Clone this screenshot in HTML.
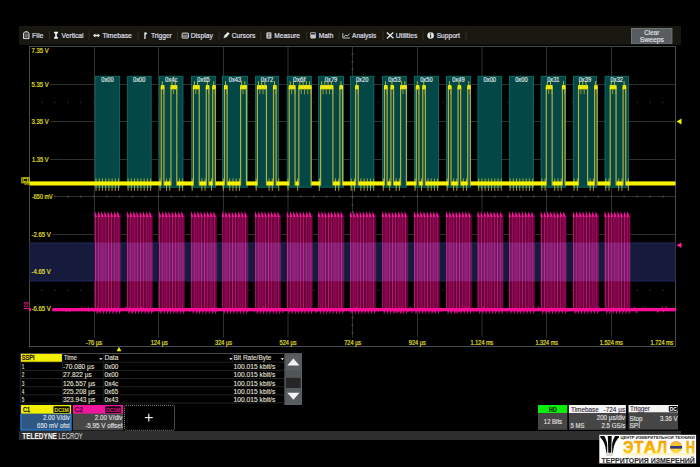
<!DOCTYPE html><html><head><meta charset="utf-8"><style>html,body{margin:0;padding:0;background:#000;width:700px;height:467px;overflow:hidden}svg{display:block}</style></head><body><svg width="700" height="467" viewBox="0 0 700 467" font-family="Liberation Sans, sans-serif"><rect x="19" y="26" width="662" height="18" fill="#191810"/><line x1="19" y1="44.5" x2="681" y2="44.5" stroke="#0c1418" stroke-width="1"/><text x="32" y="37.9" font-size="7" fill="#dcdce2" stroke="#dcdce2" stroke-width="0.22" textLength="11.4" lengthAdjust="spacingAndGlyphs">File</text><text x="61.6" y="37.9" font-size="7" fill="#dcdce2" stroke="#dcdce2" stroke-width="0.22" textLength="22" lengthAdjust="spacingAndGlyphs">Vertical</text><text x="102.4" y="37.9" font-size="7" fill="#dcdce2" stroke="#dcdce2" stroke-width="0.22" textLength="29.5" lengthAdjust="spacingAndGlyphs">Timebase</text><text x="151" y="37.9" font-size="7" fill="#dcdce2" stroke="#dcdce2" stroke-width="0.22" textLength="20.8" lengthAdjust="spacingAndGlyphs">Trigger</text><text x="190.7" y="37.9" font-size="7" fill="#dcdce2" stroke="#dcdce2" stroke-width="0.22" textLength="22.1" lengthAdjust="spacingAndGlyphs">Display</text><text x="231.7" y="37.9" font-size="7" fill="#dcdce2" stroke="#dcdce2" stroke-width="0.22" textLength="23.7" lengthAdjust="spacingAndGlyphs">Cursors</text><text x="274.2" y="37.9" font-size="7" fill="#dcdce2" stroke="#dcdce2" stroke-width="0.22" textLength="25.8" lengthAdjust="spacingAndGlyphs">Measure</text><text x="318.7" y="37.9" font-size="7" fill="#dcdce2" stroke="#dcdce2" stroke-width="0.22" textLength="14.6" lengthAdjust="spacingAndGlyphs">Math</text><text x="352.1" y="37.9" font-size="7" fill="#dcdce2" stroke="#dcdce2" stroke-width="0.22" textLength="24.2" lengthAdjust="spacingAndGlyphs">Analysis</text><text x="395.7" y="37.9" font-size="7" fill="#dcdce2" stroke="#dcdce2" stroke-width="0.22" textLength="21.6" lengthAdjust="spacingAndGlyphs">Utilities</text><text x="436.7" y="37.9" font-size="7" fill="#dcdce2" stroke="#dcdce2" stroke-width="0.22" textLength="23.2" lengthAdjust="spacingAndGlyphs">Support</text><line x1="49.5" y1="31" x2="49.5" y2="40" stroke="#2e2c26" stroke-width="1"/><line x1="89" y1="31" x2="89" y2="40" stroke="#2e2c26" stroke-width="1"/><line x1="138" y1="31" x2="138" y2="40" stroke="#2e2c26" stroke-width="1"/><line x1="177.5" y1="31" x2="177.5" y2="40" stroke="#2e2c26" stroke-width="1"/><line x1="219" y1="31" x2="219" y2="40" stroke="#2e2c26" stroke-width="1"/><line x1="260.8" y1="31" x2="260.8" y2="40" stroke="#2e2c26" stroke-width="1"/><line x1="306.6" y1="31" x2="306.6" y2="40" stroke="#2e2c26" stroke-width="1"/><line x1="339" y1="31" x2="339" y2="40" stroke="#2e2c26" stroke-width="1"/><line x1="383" y1="31" x2="383" y2="40" stroke="#2e2c26" stroke-width="1"/><line x1="423" y1="31" x2="423" y2="40" stroke="#2e2c26" stroke-width="1"/><line x1="466" y1="31" x2="466" y2="40" stroke="#2e2c26" stroke-width="1"/><path d="M23.5 33.2 L24.8 31.8 L27.7 31.8 L29 33.2 L29 38.6 L23.5 38.6 Z" fill="#4a4a46" stroke="#d8d8d8" stroke-width="1"/><line x1="24.8" y1="35" x2="27.7" y2="35" stroke="#9a9a9a" stroke-width="0.6"/><line x1="24.8" y1="36.2" x2="27.7" y2="36.2" stroke="#9a9a9a" stroke-width="0.6"/><path d="M54 31.8 L58 31.8 L58 33 L56.8 34 L56.8 36.4 L58 37.4 L58 38.8 L54 38.8 L54 37.4 L55.2 36.4 L55.2 34 L54 33 Z" fill="#f0f0f0"/><path d="M93 35.5 L95.3 33.4 L95.3 34.8 L97.7 34.8 L97.7 33.4 L100 35.5 L97.7 37.6 L97.7 36.2 L95.3 36.2 L95.3 37.6 Z" fill="#eeeeee"/><path d="M144.3 32.4 L146 32.2 L147.2 33.5 L146 34.8 L145.6 34.8 L145.6 39 L144.3 39 Z" fill="#e8e8e8"/><rect x="182.1" y="33.1" width="6.3" height="5" fill="#3a3a38" stroke="#d8d8d8" stroke-width="1" rx="0.5"/><line x1="182.8" y1="36" x2="187.6" y2="36" stroke="#d8d8d8" stroke-width="0.9"/><path d="M223.8 38 L224.6 35.4 L227.8 32.3 L229.4 33.6 L226.5 36.9 Z" fill="#e8e8e8" stroke="#e8e8e8" stroke-width="0.4"/><rect x="266.3" y="32.2" width="5.2" height="6.5" fill="#b8b8b8" rx="1.2"/><circle cx="268.9" cy="34.3" r="0.7" fill="#303030"/><circle cx="268.9" cy="36.7" r="0.7" fill="#303030"/><rect x="310.3" y="32.2" width="5.6" height="6.4" fill="#c8c8c8" rx="1"/><rect x="311" y="32.9" width="4.2" height="1.6" fill="#2a2a2a"/><path d="M342.8 33 L342.8 38 L350 38" fill="none" stroke="#d0d0d0" stroke-width="0.9"/><path d="M343.8 37 L345.8 35 L347.3 36 L349.7 33.6" fill="none" stroke="#d0d0d0" stroke-width="0.9"/><path d="M386.8 32.5 L393.5 38.3 M393.2 32.4 L387 38.4" fill="none" stroke="#e4e4e4" stroke-width="1.4"/><circle cx="430.6" cy="35.5" r="3.3" fill="#e6e6e6"/><rect x="430.1" y="34.6" width="1" height="3" fill="#191810"/><rect x="430.1" y="33" width="1" height="0.9" fill="#191810"/><rect x="631.5" y="28.5" width="40.4" height="14.8" fill="#585c5f" stroke="#70757a" stroke-width="1"/><text x="644.3" y="34.8" font-size="6.6" fill="#e8ecf0" stroke="#e8ecf0" stroke-width="0.1" textLength="15" lengthAdjust="spacingAndGlyphs">Clear</text><text x="639.8" y="42.2" font-size="6.6" fill="#e8ecf0" stroke="#e8ecf0" stroke-width="0.1" textLength="24" lengthAdjust="spacingAndGlyphs">Sweeps</text><line x1="94.5" y1="46" x2="94.5" y2="347" stroke="#2e332e" stroke-width="1"/><line x1="158.5" y1="46" x2="158.5" y2="347" stroke="#2e332e" stroke-width="1"/><line x1="223.5" y1="46" x2="223.5" y2="347" stroke="#2e332e" stroke-width="1"/><line x1="288" y1="46" x2="288" y2="347" stroke="#2e332e" stroke-width="1"/><line x1="352.5" y1="46" x2="352.5" y2="347" stroke="#2e332e" stroke-width="1"/><line x1="417.5" y1="46" x2="417.5" y2="347" stroke="#2e332e" stroke-width="1"/><line x1="482" y1="46" x2="482" y2="347" stroke="#2e332e" stroke-width="1"/><line x1="546.5" y1="46" x2="546.5" y2="347" stroke="#2e332e" stroke-width="1"/><line x1="611.5" y1="46" x2="611.5" y2="347" stroke="#2e332e" stroke-width="1"/><line x1="29" y1="84.5" x2="676" y2="84.5" stroke="#2e332e" stroke-width="1"/><line x1="29" y1="121.5" x2="676" y2="121.5" stroke="#2e332e" stroke-width="1"/><line x1="29" y1="159.5" x2="676" y2="159.5" stroke="#2e332e" stroke-width="1"/><line x1="29" y1="196.5" x2="676" y2="196.5" stroke="#2e332e" stroke-width="1"/><line x1="29" y1="234.5" x2="676" y2="234.5" stroke="#2e332e" stroke-width="1"/><line x1="29" y1="271.5" x2="676" y2="271.5" stroke="#2e332e" stroke-width="1"/><line x1="29" y1="309.5" x2="676" y2="309.5" stroke="#2e332e" stroke-width="1"/><rect x="29.5" y="46.5" width="646" height="300" fill="none" stroke="#484c48" stroke-width="1"/><rect x="41.24" y="101.7" width="1.4" height="1.4" fill="#222622"/><rect x="54.18" y="101.7" width="1.4" height="1.4" fill="#222622"/><rect x="67.12" y="101.7" width="1.4" height="1.4" fill="#222622"/><rect x="80.06" y="101.7" width="1.4" height="1.4" fill="#222622"/><rect x="93" y="101.7" width="1.4" height="1.4" fill="#222622"/><rect x="105.94" y="101.7" width="1.4" height="1.4" fill="#222622"/><rect x="118.88" y="101.7" width="1.4" height="1.4" fill="#222622"/><rect x="131.82" y="101.7" width="1.4" height="1.4" fill="#222622"/><rect x="144.76" y="101.7" width="1.4" height="1.4" fill="#222622"/><rect x="157.7" y="101.7" width="1.4" height="1.4" fill="#222622"/><rect x="170.64" y="101.7" width="1.4" height="1.4" fill="#222622"/><rect x="183.58" y="101.7" width="1.4" height="1.4" fill="#222622"/><rect x="196.52" y="101.7" width="1.4" height="1.4" fill="#222622"/><rect x="209.46" y="101.7" width="1.4" height="1.4" fill="#222622"/><rect x="222.4" y="101.7" width="1.4" height="1.4" fill="#222622"/><rect x="235.34" y="101.7" width="1.4" height="1.4" fill="#222622"/><rect x="248.28" y="101.7" width="1.4" height="1.4" fill="#222622"/><rect x="261.22" y="101.7" width="1.4" height="1.4" fill="#222622"/><rect x="274.16" y="101.7" width="1.4" height="1.4" fill="#222622"/><rect x="287.1" y="101.7" width="1.4" height="1.4" fill="#222622"/><rect x="300.04" y="101.7" width="1.4" height="1.4" fill="#222622"/><rect x="312.98" y="101.7" width="1.4" height="1.4" fill="#222622"/><rect x="325.92" y="101.7" width="1.4" height="1.4" fill="#222622"/><rect x="338.86" y="101.7" width="1.4" height="1.4" fill="#222622"/><rect x="351.8" y="101.7" width="1.4" height="1.4" fill="#222622"/><rect x="364.74" y="101.7" width="1.4" height="1.4" fill="#222622"/><rect x="377.68" y="101.7" width="1.4" height="1.4" fill="#222622"/><rect x="390.62" y="101.7" width="1.4" height="1.4" fill="#222622"/><rect x="403.56" y="101.7" width="1.4" height="1.4" fill="#222622"/><rect x="416.5" y="101.7" width="1.4" height="1.4" fill="#222622"/><rect x="429.44" y="101.7" width="1.4" height="1.4" fill="#222622"/><rect x="442.38" y="101.7" width="1.4" height="1.4" fill="#222622"/><rect x="455.32" y="101.7" width="1.4" height="1.4" fill="#222622"/><rect x="468.26" y="101.7" width="1.4" height="1.4" fill="#222622"/><rect x="481.2" y="101.7" width="1.4" height="1.4" fill="#222622"/><rect x="494.14" y="101.7" width="1.4" height="1.4" fill="#222622"/><rect x="507.08" y="101.7" width="1.4" height="1.4" fill="#222622"/><rect x="520.02" y="101.7" width="1.4" height="1.4" fill="#222622"/><rect x="532.96" y="101.7" width="1.4" height="1.4" fill="#222622"/><rect x="545.9" y="101.7" width="1.4" height="1.4" fill="#222622"/><rect x="558.84" y="101.7" width="1.4" height="1.4" fill="#222622"/><rect x="571.78" y="101.7" width="1.4" height="1.4" fill="#222622"/><rect x="584.72" y="101.7" width="1.4" height="1.4" fill="#222622"/><rect x="597.66" y="101.7" width="1.4" height="1.4" fill="#222622"/><rect x="610.6" y="101.7" width="1.4" height="1.4" fill="#222622"/><rect x="623.54" y="101.7" width="1.4" height="1.4" fill="#222622"/><rect x="636.48" y="101.7" width="1.4" height="1.4" fill="#222622"/><rect x="649.42" y="101.7" width="1.4" height="1.4" fill="#222622"/><rect x="662.36" y="101.7" width="1.4" height="1.4" fill="#222622"/><rect x="41.24" y="289.6" width="1.4" height="1.4" fill="#222622"/><rect x="54.18" y="289.6" width="1.4" height="1.4" fill="#222622"/><rect x="67.12" y="289.6" width="1.4" height="1.4" fill="#222622"/><rect x="80.06" y="289.6" width="1.4" height="1.4" fill="#222622"/><rect x="93" y="289.6" width="1.4" height="1.4" fill="#222622"/><rect x="105.94" y="289.6" width="1.4" height="1.4" fill="#222622"/><rect x="118.88" y="289.6" width="1.4" height="1.4" fill="#222622"/><rect x="131.82" y="289.6" width="1.4" height="1.4" fill="#222622"/><rect x="144.76" y="289.6" width="1.4" height="1.4" fill="#222622"/><rect x="157.7" y="289.6" width="1.4" height="1.4" fill="#222622"/><rect x="170.64" y="289.6" width="1.4" height="1.4" fill="#222622"/><rect x="183.58" y="289.6" width="1.4" height="1.4" fill="#222622"/><rect x="196.52" y="289.6" width="1.4" height="1.4" fill="#222622"/><rect x="209.46" y="289.6" width="1.4" height="1.4" fill="#222622"/><rect x="222.4" y="289.6" width="1.4" height="1.4" fill="#222622"/><rect x="235.34" y="289.6" width="1.4" height="1.4" fill="#222622"/><rect x="248.28" y="289.6" width="1.4" height="1.4" fill="#222622"/><rect x="261.22" y="289.6" width="1.4" height="1.4" fill="#222622"/><rect x="274.16" y="289.6" width="1.4" height="1.4" fill="#222622"/><rect x="287.1" y="289.6" width="1.4" height="1.4" fill="#222622"/><rect x="300.04" y="289.6" width="1.4" height="1.4" fill="#222622"/><rect x="312.98" y="289.6" width="1.4" height="1.4" fill="#222622"/><rect x="325.92" y="289.6" width="1.4" height="1.4" fill="#222622"/><rect x="338.86" y="289.6" width="1.4" height="1.4" fill="#222622"/><rect x="351.8" y="289.6" width="1.4" height="1.4" fill="#222622"/><rect x="364.74" y="289.6" width="1.4" height="1.4" fill="#222622"/><rect x="377.68" y="289.6" width="1.4" height="1.4" fill="#222622"/><rect x="390.62" y="289.6" width="1.4" height="1.4" fill="#222622"/><rect x="403.56" y="289.6" width="1.4" height="1.4" fill="#222622"/><rect x="416.5" y="289.6" width="1.4" height="1.4" fill="#222622"/><rect x="429.44" y="289.6" width="1.4" height="1.4" fill="#222622"/><rect x="442.38" y="289.6" width="1.4" height="1.4" fill="#222622"/><rect x="455.32" y="289.6" width="1.4" height="1.4" fill="#222622"/><rect x="468.26" y="289.6" width="1.4" height="1.4" fill="#222622"/><rect x="481.2" y="289.6" width="1.4" height="1.4" fill="#222622"/><rect x="494.14" y="289.6" width="1.4" height="1.4" fill="#222622"/><rect x="507.08" y="289.6" width="1.4" height="1.4" fill="#222622"/><rect x="520.02" y="289.6" width="1.4" height="1.4" fill="#222622"/><rect x="532.96" y="289.6" width="1.4" height="1.4" fill="#222622"/><rect x="545.9" y="289.6" width="1.4" height="1.4" fill="#222622"/><rect x="558.84" y="289.6" width="1.4" height="1.4" fill="#222622"/><rect x="571.78" y="289.6" width="1.4" height="1.4" fill="#222622"/><rect x="584.72" y="289.6" width="1.4" height="1.4" fill="#222622"/><rect x="597.66" y="289.6" width="1.4" height="1.4" fill="#222622"/><rect x="610.6" y="289.6" width="1.4" height="1.4" fill="#222622"/><rect x="623.54" y="289.6" width="1.4" height="1.4" fill="#222622"/><rect x="636.48" y="289.6" width="1.4" height="1.4" fill="#222622"/><rect x="649.42" y="289.6" width="1.4" height="1.4" fill="#222622"/><rect x="662.36" y="289.6" width="1.4" height="1.4" fill="#222622"/><rect x="41.24" y="195.6" width="1.4" height="1.8" fill="#4a4e4a"/><rect x="54.18" y="195.6" width="1.4" height="1.8" fill="#4a4e4a"/><rect x="67.12" y="195.6" width="1.4" height="1.8" fill="#4a4e4a"/><rect x="80.06" y="195.6" width="1.4" height="1.8" fill="#4a4e4a"/><rect x="93" y="195.6" width="1.4" height="1.8" fill="#4a4e4a"/><rect x="105.94" y="195.6" width="1.4" height="1.8" fill="#4a4e4a"/><rect x="118.88" y="195.6" width="1.4" height="1.8" fill="#4a4e4a"/><rect x="131.82" y="195.6" width="1.4" height="1.8" fill="#4a4e4a"/><rect x="144.76" y="195.6" width="1.4" height="1.8" fill="#4a4e4a"/><rect x="157.7" y="195.6" width="1.4" height="1.8" fill="#4a4e4a"/><rect x="170.64" y="195.6" width="1.4" height="1.8" fill="#4a4e4a"/><rect x="183.58" y="195.6" width="1.4" height="1.8" fill="#4a4e4a"/><rect x="196.52" y="195.6" width="1.4" height="1.8" fill="#4a4e4a"/><rect x="209.46" y="195.6" width="1.4" height="1.8" fill="#4a4e4a"/><rect x="222.4" y="195.6" width="1.4" height="1.8" fill="#4a4e4a"/><rect x="235.34" y="195.6" width="1.4" height="1.8" fill="#4a4e4a"/><rect x="248.28" y="195.6" width="1.4" height="1.8" fill="#4a4e4a"/><rect x="261.22" y="195.6" width="1.4" height="1.8" fill="#4a4e4a"/><rect x="274.16" y="195.6" width="1.4" height="1.8" fill="#4a4e4a"/><rect x="287.1" y="195.6" width="1.4" height="1.8" fill="#4a4e4a"/><rect x="300.04" y="195.6" width="1.4" height="1.8" fill="#4a4e4a"/><rect x="312.98" y="195.6" width="1.4" height="1.8" fill="#4a4e4a"/><rect x="325.92" y="195.6" width="1.4" height="1.8" fill="#4a4e4a"/><rect x="338.86" y="195.6" width="1.4" height="1.8" fill="#4a4e4a"/><rect x="351.8" y="195.6" width="1.4" height="1.8" fill="#4a4e4a"/><rect x="364.74" y="195.6" width="1.4" height="1.8" fill="#4a4e4a"/><rect x="377.68" y="195.6" width="1.4" height="1.8" fill="#4a4e4a"/><rect x="390.62" y="195.6" width="1.4" height="1.8" fill="#4a4e4a"/><rect x="403.56" y="195.6" width="1.4" height="1.8" fill="#4a4e4a"/><rect x="416.5" y="195.6" width="1.4" height="1.8" fill="#4a4e4a"/><rect x="429.44" y="195.6" width="1.4" height="1.8" fill="#4a4e4a"/><rect x="442.38" y="195.6" width="1.4" height="1.8" fill="#4a4e4a"/><rect x="455.32" y="195.6" width="1.4" height="1.8" fill="#4a4e4a"/><rect x="468.26" y="195.6" width="1.4" height="1.8" fill="#4a4e4a"/><rect x="481.2" y="195.6" width="1.4" height="1.8" fill="#4a4e4a"/><rect x="494.14" y="195.6" width="1.4" height="1.8" fill="#4a4e4a"/><rect x="507.08" y="195.6" width="1.4" height="1.8" fill="#4a4e4a"/><rect x="520.02" y="195.6" width="1.4" height="1.8" fill="#4a4e4a"/><rect x="532.96" y="195.6" width="1.4" height="1.8" fill="#4a4e4a"/><rect x="545.9" y="195.6" width="1.4" height="1.8" fill="#4a4e4a"/><rect x="558.84" y="195.6" width="1.4" height="1.8" fill="#4a4e4a"/><rect x="571.78" y="195.6" width="1.4" height="1.8" fill="#4a4e4a"/><rect x="584.72" y="195.6" width="1.4" height="1.8" fill="#4a4e4a"/><rect x="597.66" y="195.6" width="1.4" height="1.8" fill="#4a4e4a"/><rect x="610.6" y="195.6" width="1.4" height="1.8" fill="#4a4e4a"/><rect x="623.54" y="195.6" width="1.4" height="1.8" fill="#4a4e4a"/><rect x="636.48" y="195.6" width="1.4" height="1.8" fill="#4a4e4a"/><rect x="649.42" y="195.6" width="1.4" height="1.8" fill="#4a4e4a"/><rect x="662.36" y="195.6" width="1.4" height="1.8" fill="#4a4e4a"/><rect x="351.6" y="53.52" width="1.8" height="1.4" fill="#4a4e4a"/><rect x="351.6" y="61.05" width="1.8" height="1.4" fill="#4a4e4a"/><rect x="351.6" y="68.58" width="1.8" height="1.4" fill="#4a4e4a"/><rect x="351.6" y="76.1" width="1.8" height="1.4" fill="#4a4e4a"/><rect x="351.6" y="83.62" width="1.8" height="1.4" fill="#4a4e4a"/><rect x="351.6" y="91.15" width="1.8" height="1.4" fill="#4a4e4a"/><rect x="351.6" y="98.67" width="1.8" height="1.4" fill="#4a4e4a"/><rect x="351.6" y="106.2" width="1.8" height="1.4" fill="#4a4e4a"/><rect x="351.6" y="113.72" width="1.8" height="1.4" fill="#4a4e4a"/><rect x="351.6" y="121.25" width="1.8" height="1.4" fill="#4a4e4a"/><rect x="351.6" y="128.78" width="1.8" height="1.4" fill="#4a4e4a"/><rect x="351.6" y="136.3" width="1.8" height="1.4" fill="#4a4e4a"/><rect x="351.6" y="143.83" width="1.8" height="1.4" fill="#4a4e4a"/><rect x="351.6" y="151.35" width="1.8" height="1.4" fill="#4a4e4a"/><rect x="351.6" y="158.88" width="1.8" height="1.4" fill="#4a4e4a"/><rect x="351.6" y="166.4" width="1.8" height="1.4" fill="#4a4e4a"/><rect x="351.6" y="173.93" width="1.8" height="1.4" fill="#4a4e4a"/><rect x="351.6" y="181.45" width="1.8" height="1.4" fill="#4a4e4a"/><rect x="351.6" y="188.98" width="1.8" height="1.4" fill="#4a4e4a"/><rect x="351.6" y="196.5" width="1.8" height="1.4" fill="#4a4e4a"/><rect x="351.6" y="204.03" width="1.8" height="1.4" fill="#4a4e4a"/><rect x="351.6" y="211.55" width="1.8" height="1.4" fill="#4a4e4a"/><rect x="351.6" y="219.07" width="1.8" height="1.4" fill="#4a4e4a"/><rect x="351.6" y="226.6" width="1.8" height="1.4" fill="#4a4e4a"/><rect x="351.6" y="234.12" width="1.8" height="1.4" fill="#4a4e4a"/><rect x="351.6" y="241.65" width="1.8" height="1.4" fill="#4a4e4a"/><rect x="351.6" y="249.18" width="1.8" height="1.4" fill="#4a4e4a"/><rect x="351.6" y="256.7" width="1.8" height="1.4" fill="#4a4e4a"/><rect x="351.6" y="264.23" width="1.8" height="1.4" fill="#4a4e4a"/><rect x="351.6" y="271.75" width="1.8" height="1.4" fill="#4a4e4a"/><rect x="351.6" y="279.28" width="1.8" height="1.4" fill="#4a4e4a"/><rect x="351.6" y="286.8" width="1.8" height="1.4" fill="#4a4e4a"/><rect x="351.6" y="294.32" width="1.8" height="1.4" fill="#4a4e4a"/><rect x="351.6" y="301.85" width="1.8" height="1.4" fill="#4a4e4a"/><rect x="351.6" y="309.38" width="1.8" height="1.4" fill="#4a4e4a"/><rect x="351.6" y="316.9" width="1.8" height="1.4" fill="#4a4e4a"/><rect x="351.6" y="324.43" width="1.8" height="1.4" fill="#4a4e4a"/><rect x="351.6" y="331.95" width="1.8" height="1.4" fill="#4a4e4a"/><rect x="351.6" y="339.48" width="1.8" height="1.4" fill="#4a4e4a"/><rect x="29.5" y="242.5" width="646" height="38.8" fill="#161b3e"/><line x1="29.5" y1="243" x2="675.5" y2="243" stroke="#262a58" stroke-width="0.8"/><line x1="29.5" y1="281" x2="675.5" y2="281" stroke="#262a58" stroke-width="0.8"/><rect x="95.25" y="76.3" width="24.4" height="110.9" fill="#034846" stroke="#0c6e68" stroke-width="0.9"/><rect x="127.35" y="76.3" width="23.8" height="110.9" fill="#034846" stroke="#0c6e68" stroke-width="0.9"/><rect x="159.35" y="76.3" width="23.6" height="110.9" fill="#034846" stroke="#0c6e68" stroke-width="0.9"/><rect x="191.45" y="76.3" width="24.2" height="110.9" fill="#034846" stroke="#0c6e68" stroke-width="0.9"/><rect x="222.55" y="76.3" width="24.9" height="110.9" fill="#034846" stroke="#0c6e68" stroke-width="0.9"/><rect x="255.45" y="76.3" width="23" height="110.9" fill="#034846" stroke="#0c6e68" stroke-width="0.9"/><rect x="287.25" y="76.3" width="24.1" height="110.9" fill="#034846" stroke="#0c6e68" stroke-width="0.9"/><rect x="318.65" y="76.3" width="24.8" height="110.9" fill="#034846" stroke="#0c6e68" stroke-width="0.9"/><rect x="350.45" y="76.3" width="23.4" height="110.9" fill="#034846" stroke="#0c6e68" stroke-width="0.9"/><rect x="382.55" y="76.3" width="23.8" height="110.9" fill="#034846" stroke="#0c6e68" stroke-width="0.9"/><rect x="414.35" y="76.3" width="24.1" height="110.9" fill="#034846" stroke="#0c6e68" stroke-width="0.9"/><rect x="446.45" y="76.3" width="24.1" height="110.9" fill="#034846" stroke="#0c6e68" stroke-width="0.9"/><rect x="477.95" y="76.3" width="23.7" height="110.9" fill="#034846" stroke="#0c6e68" stroke-width="0.9"/><rect x="509.35" y="76.3" width="24.1" height="110.9" fill="#034846" stroke="#0c6e68" stroke-width="0.9"/><rect x="541.15" y="76.3" width="24.4" height="110.9" fill="#034846" stroke="#0c6e68" stroke-width="0.9"/><rect x="573.35" y="76.3" width="23.1" height="110.9" fill="#034846" stroke="#0c6e68" stroke-width="0.9"/><rect x="605.05" y="76.3" width="23.5" height="110.9" fill="#034846" stroke="#0c6e68" stroke-width="0.9"/><g style="isolation:isolate"><rect x="94.8" y="213.5" width="26.36" height="96.3" fill="#34031e"/><line x1="95.5" y1="213.5" x2="95.5" y2="309.8" stroke="#c80c74" stroke-width="1.1"/><line x1="97.1" y1="216.5" x2="97.1" y2="309.8" stroke="#8c0650" stroke-width="1"/><path d="M94.8 211 L97.2 216.9 L94.8 216.9 Z" fill="#ff14a0"/><path d="M96.3 310.3 L98.3 310.3 L96.6 314.4 Z" fill="#f014a0"/><line x1="98.72" y1="213.5" x2="98.72" y2="309.8" stroke="#c80c74" stroke-width="1.1"/><line x1="100.32" y1="216.5" x2="100.32" y2="309.8" stroke="#8c0650" stroke-width="1"/><path d="M98.02 211 L100.42 216.9 L98.02 216.9 Z" fill="#ff14a0"/><path d="M99.52 310.3 L101.52 310.3 L99.82 314.4 Z" fill="#f014a0"/><line x1="101.94" y1="213.5" x2="101.94" y2="309.8" stroke="#c80c74" stroke-width="1.1"/><line x1="103.54" y1="216.5" x2="103.54" y2="309.8" stroke="#8c0650" stroke-width="1"/><path d="M101.24 211 L103.64 216.9 L101.24 216.9 Z" fill="#ff14a0"/><path d="M102.74 310.3 L104.74 310.3 L103.04 314.4 Z" fill="#f014a0"/><line x1="105.16" y1="213.5" x2="105.16" y2="309.8" stroke="#c80c74" stroke-width="1.1"/><line x1="106.76" y1="216.5" x2="106.76" y2="309.8" stroke="#8c0650" stroke-width="1"/><path d="M104.46 211 L106.86 216.9 L104.46 216.9 Z" fill="#ff14a0"/><path d="M105.96 310.3 L107.96 310.3 L106.26 314.4 Z" fill="#f014a0"/><line x1="108.38" y1="213.5" x2="108.38" y2="309.8" stroke="#c80c74" stroke-width="1.1"/><line x1="109.98" y1="216.5" x2="109.98" y2="309.8" stroke="#8c0650" stroke-width="1"/><path d="M107.68 211 L110.08 216.9 L107.68 216.9 Z" fill="#ff14a0"/><path d="M109.18 310.3 L111.18 310.3 L109.48 314.4 Z" fill="#f014a0"/><line x1="111.6" y1="213.5" x2="111.6" y2="309.8" stroke="#c80c74" stroke-width="1.1"/><line x1="113.2" y1="216.5" x2="113.2" y2="309.8" stroke="#8c0650" stroke-width="1"/><path d="M110.9 211 L113.3 216.9 L110.9 216.9 Z" fill="#ff14a0"/><path d="M112.4 310.3 L114.4 310.3 L112.7 314.4 Z" fill="#f014a0"/><line x1="114.82" y1="213.5" x2="114.82" y2="309.8" stroke="#c80c74" stroke-width="1.1"/><line x1="116.42" y1="216.5" x2="116.42" y2="309.8" stroke="#8c0650" stroke-width="1"/><path d="M114.12 211 L116.52 216.9 L114.12 216.9 Z" fill="#ff14a0"/><path d="M115.62 310.3 L117.62 310.3 L115.92 314.4 Z" fill="#f014a0"/><line x1="118.04" y1="213.5" x2="118.04" y2="309.8" stroke="#c80c74" stroke-width="1.1"/><line x1="119.64" y1="216.5" x2="119.64" y2="309.8" stroke="#8c0650" stroke-width="1"/><path d="M117.34 211 L119.74 216.9 L117.34 216.9 Z" fill="#ff14a0"/><path d="M118.84 310.3 L120.84 310.3 L119.14 314.4 Z" fill="#f014a0"/><rect x="126.9" y="213.5" width="26.36" height="96.3" fill="#34031e"/><line x1="127.6" y1="213.5" x2="127.6" y2="309.8" stroke="#c80c74" stroke-width="1.1"/><line x1="129.2" y1="216.5" x2="129.2" y2="309.8" stroke="#8c0650" stroke-width="1"/><path d="M126.9 211 L129.3 216.9 L126.9 216.9 Z" fill="#ff14a0"/><path d="M128.4 310.3 L130.4 310.3 L128.7 314.4 Z" fill="#f014a0"/><line x1="130.82" y1="213.5" x2="130.82" y2="309.8" stroke="#c80c74" stroke-width="1.1"/><line x1="132.42" y1="216.5" x2="132.42" y2="309.8" stroke="#8c0650" stroke-width="1"/><path d="M130.12 211 L132.52 216.9 L130.12 216.9 Z" fill="#ff14a0"/><path d="M131.62 310.3 L133.62 310.3 L131.92 314.4 Z" fill="#f014a0"/><line x1="134.04" y1="213.5" x2="134.04" y2="309.8" stroke="#c80c74" stroke-width="1.1"/><line x1="135.64" y1="216.5" x2="135.64" y2="309.8" stroke="#8c0650" stroke-width="1"/><path d="M133.34 211 L135.74 216.9 L133.34 216.9 Z" fill="#ff14a0"/><path d="M134.84 310.3 L136.84 310.3 L135.14 314.4 Z" fill="#f014a0"/><line x1="137.26" y1="213.5" x2="137.26" y2="309.8" stroke="#c80c74" stroke-width="1.1"/><line x1="138.86" y1="216.5" x2="138.86" y2="309.8" stroke="#8c0650" stroke-width="1"/><path d="M136.56 211 L138.96 216.9 L136.56 216.9 Z" fill="#ff14a0"/><path d="M138.06 310.3 L140.06 310.3 L138.36 314.4 Z" fill="#f014a0"/><line x1="140.48" y1="213.5" x2="140.48" y2="309.8" stroke="#c80c74" stroke-width="1.1"/><line x1="142.08" y1="216.5" x2="142.08" y2="309.8" stroke="#8c0650" stroke-width="1"/><path d="M139.78 211 L142.18 216.9 L139.78 216.9 Z" fill="#ff14a0"/><path d="M141.28 310.3 L143.28 310.3 L141.58 314.4 Z" fill="#f014a0"/><line x1="143.7" y1="213.5" x2="143.7" y2="309.8" stroke="#c80c74" stroke-width="1.1"/><line x1="145.3" y1="216.5" x2="145.3" y2="309.8" stroke="#8c0650" stroke-width="1"/><path d="M143 211 L145.4 216.9 L143 216.9 Z" fill="#ff14a0"/><path d="M144.5 310.3 L146.5 310.3 L144.8 314.4 Z" fill="#f014a0"/><line x1="146.92" y1="213.5" x2="146.92" y2="309.8" stroke="#c80c74" stroke-width="1.1"/><line x1="148.52" y1="216.5" x2="148.52" y2="309.8" stroke="#8c0650" stroke-width="1"/><path d="M146.22 211 L148.62 216.9 L146.22 216.9 Z" fill="#ff14a0"/><path d="M147.72 310.3 L149.72 310.3 L148.02 314.4 Z" fill="#f014a0"/><line x1="150.14" y1="213.5" x2="150.14" y2="309.8" stroke="#c80c74" stroke-width="1.1"/><line x1="151.74" y1="216.5" x2="151.74" y2="309.8" stroke="#8c0650" stroke-width="1"/><path d="M149.44 211 L151.84 216.9 L149.44 216.9 Z" fill="#ff14a0"/><path d="M150.94 310.3 L152.94 310.3 L151.24 314.4 Z" fill="#f014a0"/><rect x="158.9" y="213.5" width="26.36" height="96.3" fill="#34031e"/><line x1="159.6" y1="213.5" x2="159.6" y2="309.8" stroke="#c80c74" stroke-width="1.1"/><line x1="161.2" y1="216.5" x2="161.2" y2="309.8" stroke="#8c0650" stroke-width="1"/><path d="M158.9 211 L161.3 216.9 L158.9 216.9 Z" fill="#ff14a0"/><path d="M160.4 310.3 L162.4 310.3 L160.7 314.4 Z" fill="#f014a0"/><line x1="162.82" y1="213.5" x2="162.82" y2="309.8" stroke="#c80c74" stroke-width="1.1"/><line x1="164.42" y1="216.5" x2="164.42" y2="309.8" stroke="#8c0650" stroke-width="1"/><path d="M162.12 211 L164.52 216.9 L162.12 216.9 Z" fill="#ff14a0"/><path d="M163.62 310.3 L165.62 310.3 L163.92 314.4 Z" fill="#f014a0"/><line x1="166.04" y1="213.5" x2="166.04" y2="309.8" stroke="#c80c74" stroke-width="1.1"/><line x1="167.64" y1="216.5" x2="167.64" y2="309.8" stroke="#8c0650" stroke-width="1"/><path d="M165.34 211 L167.74 216.9 L165.34 216.9 Z" fill="#ff14a0"/><path d="M166.84 310.3 L168.84 310.3 L167.14 314.4 Z" fill="#f014a0"/><line x1="169.26" y1="213.5" x2="169.26" y2="309.8" stroke="#c80c74" stroke-width="1.1"/><line x1="170.86" y1="216.5" x2="170.86" y2="309.8" stroke="#8c0650" stroke-width="1"/><path d="M168.56 211 L170.96 216.9 L168.56 216.9 Z" fill="#ff14a0"/><path d="M170.06 310.3 L172.06 310.3 L170.36 314.4 Z" fill="#f014a0"/><line x1="172.48" y1="213.5" x2="172.48" y2="309.8" stroke="#c80c74" stroke-width="1.1"/><line x1="174.08" y1="216.5" x2="174.08" y2="309.8" stroke="#8c0650" stroke-width="1"/><path d="M171.78 211 L174.18 216.9 L171.78 216.9 Z" fill="#ff14a0"/><path d="M173.28 310.3 L175.28 310.3 L173.58 314.4 Z" fill="#f014a0"/><line x1="175.7" y1="213.5" x2="175.7" y2="309.8" stroke="#c80c74" stroke-width="1.1"/><line x1="177.3" y1="216.5" x2="177.3" y2="309.8" stroke="#8c0650" stroke-width="1"/><path d="M175 211 L177.4 216.9 L175 216.9 Z" fill="#ff14a0"/><path d="M176.5 310.3 L178.5 310.3 L176.8 314.4 Z" fill="#f014a0"/><line x1="178.92" y1="213.5" x2="178.92" y2="309.8" stroke="#c80c74" stroke-width="1.1"/><line x1="180.52" y1="216.5" x2="180.52" y2="309.8" stroke="#8c0650" stroke-width="1"/><path d="M178.22 211 L180.62 216.9 L178.22 216.9 Z" fill="#ff14a0"/><path d="M179.72 310.3 L181.72 310.3 L180.02 314.4 Z" fill="#f014a0"/><line x1="182.14" y1="213.5" x2="182.14" y2="309.8" stroke="#c80c74" stroke-width="1.1"/><line x1="183.74" y1="216.5" x2="183.74" y2="309.8" stroke="#8c0650" stroke-width="1"/><path d="M181.44 211 L183.84 216.9 L181.44 216.9 Z" fill="#ff14a0"/><path d="M182.94 310.3 L184.94 310.3 L183.24 314.4 Z" fill="#f014a0"/><rect x="191" y="213.5" width="26.36" height="96.3" fill="#34031e"/><line x1="191.7" y1="213.5" x2="191.7" y2="309.8" stroke="#c80c74" stroke-width="1.1"/><line x1="193.3" y1="216.5" x2="193.3" y2="309.8" stroke="#8c0650" stroke-width="1"/><path d="M191 211 L193.4 216.9 L191 216.9 Z" fill="#ff14a0"/><path d="M192.5 310.3 L194.5 310.3 L192.8 314.4 Z" fill="#f014a0"/><line x1="194.92" y1="213.5" x2="194.92" y2="309.8" stroke="#c80c74" stroke-width="1.1"/><line x1="196.52" y1="216.5" x2="196.52" y2="309.8" stroke="#8c0650" stroke-width="1"/><path d="M194.22 211 L196.62 216.9 L194.22 216.9 Z" fill="#ff14a0"/><path d="M195.72 310.3 L197.72 310.3 L196.02 314.4 Z" fill="#f014a0"/><line x1="198.14" y1="213.5" x2="198.14" y2="309.8" stroke="#c80c74" stroke-width="1.1"/><line x1="199.74" y1="216.5" x2="199.74" y2="309.8" stroke="#8c0650" stroke-width="1"/><path d="M197.44 211 L199.84 216.9 L197.44 216.9 Z" fill="#ff14a0"/><path d="M198.94 310.3 L200.94 310.3 L199.24 314.4 Z" fill="#f014a0"/><line x1="201.36" y1="213.5" x2="201.36" y2="309.8" stroke="#c80c74" stroke-width="1.1"/><line x1="202.96" y1="216.5" x2="202.96" y2="309.8" stroke="#8c0650" stroke-width="1"/><path d="M200.66 211 L203.06 216.9 L200.66 216.9 Z" fill="#ff14a0"/><path d="M202.16 310.3 L204.16 310.3 L202.46 314.4 Z" fill="#f014a0"/><line x1="204.58" y1="213.5" x2="204.58" y2="309.8" stroke="#c80c74" stroke-width="1.1"/><line x1="206.18" y1="216.5" x2="206.18" y2="309.8" stroke="#8c0650" stroke-width="1"/><path d="M203.88 211 L206.28 216.9 L203.88 216.9 Z" fill="#ff14a0"/><path d="M205.38 310.3 L207.38 310.3 L205.68 314.4 Z" fill="#f014a0"/><line x1="207.8" y1="213.5" x2="207.8" y2="309.8" stroke="#c80c74" stroke-width="1.1"/><line x1="209.4" y1="216.5" x2="209.4" y2="309.8" stroke="#8c0650" stroke-width="1"/><path d="M207.1 211 L209.5 216.9 L207.1 216.9 Z" fill="#ff14a0"/><path d="M208.6 310.3 L210.6 310.3 L208.9 314.4 Z" fill="#f014a0"/><line x1="211.02" y1="213.5" x2="211.02" y2="309.8" stroke="#c80c74" stroke-width="1.1"/><line x1="212.62" y1="216.5" x2="212.62" y2="309.8" stroke="#8c0650" stroke-width="1"/><path d="M210.32 211 L212.72 216.9 L210.32 216.9 Z" fill="#ff14a0"/><path d="M211.82 310.3 L213.82 310.3 L212.12 314.4 Z" fill="#f014a0"/><line x1="214.24" y1="213.5" x2="214.24" y2="309.8" stroke="#c80c74" stroke-width="1.1"/><line x1="215.84" y1="216.5" x2="215.84" y2="309.8" stroke="#8c0650" stroke-width="1"/><path d="M213.54 211 L215.94 216.9 L213.54 216.9 Z" fill="#ff14a0"/><path d="M215.04 310.3 L217.04 310.3 L215.34 314.4 Z" fill="#f014a0"/><rect x="222.1" y="213.5" width="26.36" height="96.3" fill="#34031e"/><line x1="222.8" y1="213.5" x2="222.8" y2="309.8" stroke="#c80c74" stroke-width="1.1"/><line x1="224.4" y1="216.5" x2="224.4" y2="309.8" stroke="#8c0650" stroke-width="1"/><path d="M222.1 211 L224.5 216.9 L222.1 216.9 Z" fill="#ff14a0"/><path d="M223.6 310.3 L225.6 310.3 L223.9 314.4 Z" fill="#f014a0"/><line x1="226.02" y1="213.5" x2="226.02" y2="309.8" stroke="#c80c74" stroke-width="1.1"/><line x1="227.62" y1="216.5" x2="227.62" y2="309.8" stroke="#8c0650" stroke-width="1"/><path d="M225.32 211 L227.72 216.9 L225.32 216.9 Z" fill="#ff14a0"/><path d="M226.82 310.3 L228.82 310.3 L227.12 314.4 Z" fill="#f014a0"/><line x1="229.24" y1="213.5" x2="229.24" y2="309.8" stroke="#c80c74" stroke-width="1.1"/><line x1="230.84" y1="216.5" x2="230.84" y2="309.8" stroke="#8c0650" stroke-width="1"/><path d="M228.54 211 L230.94 216.9 L228.54 216.9 Z" fill="#ff14a0"/><path d="M230.04 310.3 L232.04 310.3 L230.34 314.4 Z" fill="#f014a0"/><line x1="232.46" y1="213.5" x2="232.46" y2="309.8" stroke="#c80c74" stroke-width="1.1"/><line x1="234.06" y1="216.5" x2="234.06" y2="309.8" stroke="#8c0650" stroke-width="1"/><path d="M231.76 211 L234.16 216.9 L231.76 216.9 Z" fill="#ff14a0"/><path d="M233.26 310.3 L235.26 310.3 L233.56 314.4 Z" fill="#f014a0"/><line x1="235.68" y1="213.5" x2="235.68" y2="309.8" stroke="#c80c74" stroke-width="1.1"/><line x1="237.28" y1="216.5" x2="237.28" y2="309.8" stroke="#8c0650" stroke-width="1"/><path d="M234.98 211 L237.38 216.9 L234.98 216.9 Z" fill="#ff14a0"/><path d="M236.48 310.3 L238.48 310.3 L236.78 314.4 Z" fill="#f014a0"/><line x1="238.9" y1="213.5" x2="238.9" y2="309.8" stroke="#c80c74" stroke-width="1.1"/><line x1="240.5" y1="216.5" x2="240.5" y2="309.8" stroke="#8c0650" stroke-width="1"/><path d="M238.2 211 L240.6 216.9 L238.2 216.9 Z" fill="#ff14a0"/><path d="M239.7 310.3 L241.7 310.3 L240 314.4 Z" fill="#f014a0"/><line x1="242.12" y1="213.5" x2="242.12" y2="309.8" stroke="#c80c74" stroke-width="1.1"/><line x1="243.72" y1="216.5" x2="243.72" y2="309.8" stroke="#8c0650" stroke-width="1"/><path d="M241.42 211 L243.82 216.9 L241.42 216.9 Z" fill="#ff14a0"/><path d="M242.92 310.3 L244.92 310.3 L243.22 314.4 Z" fill="#f014a0"/><line x1="245.34" y1="213.5" x2="245.34" y2="309.8" stroke="#c80c74" stroke-width="1.1"/><line x1="246.94" y1="216.5" x2="246.94" y2="309.8" stroke="#8c0650" stroke-width="1"/><path d="M244.64 211 L247.04 216.9 L244.64 216.9 Z" fill="#ff14a0"/><path d="M246.14 310.3 L248.14 310.3 L246.44 314.4 Z" fill="#f014a0"/><rect x="255" y="213.5" width="26.36" height="96.3" fill="#34031e"/><line x1="255.7" y1="213.5" x2="255.7" y2="309.8" stroke="#c80c74" stroke-width="1.1"/><line x1="257.3" y1="216.5" x2="257.3" y2="309.8" stroke="#8c0650" stroke-width="1"/><path d="M255 211 L257.4 216.9 L255 216.9 Z" fill="#ff14a0"/><path d="M256.5 310.3 L258.5 310.3 L256.8 314.4 Z" fill="#f014a0"/><line x1="258.92" y1="213.5" x2="258.92" y2="309.8" stroke="#c80c74" stroke-width="1.1"/><line x1="260.52" y1="216.5" x2="260.52" y2="309.8" stroke="#8c0650" stroke-width="1"/><path d="M258.22 211 L260.62 216.9 L258.22 216.9 Z" fill="#ff14a0"/><path d="M259.72 310.3 L261.72 310.3 L260.02 314.4 Z" fill="#f014a0"/><line x1="262.14" y1="213.5" x2="262.14" y2="309.8" stroke="#c80c74" stroke-width="1.1"/><line x1="263.74" y1="216.5" x2="263.74" y2="309.8" stroke="#8c0650" stroke-width="1"/><path d="M261.44 211 L263.84 216.9 L261.44 216.9 Z" fill="#ff14a0"/><path d="M262.94 310.3 L264.94 310.3 L263.24 314.4 Z" fill="#f014a0"/><line x1="265.36" y1="213.5" x2="265.36" y2="309.8" stroke="#c80c74" stroke-width="1.1"/><line x1="266.96" y1="216.5" x2="266.96" y2="309.8" stroke="#8c0650" stroke-width="1"/><path d="M264.66 211 L267.06 216.9 L264.66 216.9 Z" fill="#ff14a0"/><path d="M266.16 310.3 L268.16 310.3 L266.46 314.4 Z" fill="#f014a0"/><line x1="268.58" y1="213.5" x2="268.58" y2="309.8" stroke="#c80c74" stroke-width="1.1"/><line x1="270.18" y1="216.5" x2="270.18" y2="309.8" stroke="#8c0650" stroke-width="1"/><path d="M267.88 211 L270.28 216.9 L267.88 216.9 Z" fill="#ff14a0"/><path d="M269.38 310.3 L271.38 310.3 L269.68 314.4 Z" fill="#f014a0"/><line x1="271.8" y1="213.5" x2="271.8" y2="309.8" stroke="#c80c74" stroke-width="1.1"/><line x1="273.4" y1="216.5" x2="273.4" y2="309.8" stroke="#8c0650" stroke-width="1"/><path d="M271.1 211 L273.5 216.9 L271.1 216.9 Z" fill="#ff14a0"/><path d="M272.6 310.3 L274.6 310.3 L272.9 314.4 Z" fill="#f014a0"/><line x1="275.02" y1="213.5" x2="275.02" y2="309.8" stroke="#c80c74" stroke-width="1.1"/><line x1="276.62" y1="216.5" x2="276.62" y2="309.8" stroke="#8c0650" stroke-width="1"/><path d="M274.32 211 L276.72 216.9 L274.32 216.9 Z" fill="#ff14a0"/><path d="M275.82 310.3 L277.82 310.3 L276.12 314.4 Z" fill="#f014a0"/><line x1="278.24" y1="213.5" x2="278.24" y2="309.8" stroke="#c80c74" stroke-width="1.1"/><line x1="279.84" y1="216.5" x2="279.84" y2="309.8" stroke="#8c0650" stroke-width="1"/><path d="M277.54 211 L279.94 216.9 L277.54 216.9 Z" fill="#ff14a0"/><path d="M279.04 310.3 L281.04 310.3 L279.34 314.4 Z" fill="#f014a0"/><rect x="286.8" y="213.5" width="26.36" height="96.3" fill="#34031e"/><line x1="287.5" y1="213.5" x2="287.5" y2="309.8" stroke="#c80c74" stroke-width="1.1"/><line x1="289.1" y1="216.5" x2="289.1" y2="309.8" stroke="#8c0650" stroke-width="1"/><path d="M286.8 211 L289.2 216.9 L286.8 216.9 Z" fill="#ff14a0"/><path d="M288.3 310.3 L290.3 310.3 L288.6 314.4 Z" fill="#f014a0"/><line x1="290.72" y1="213.5" x2="290.72" y2="309.8" stroke="#c80c74" stroke-width="1.1"/><line x1="292.32" y1="216.5" x2="292.32" y2="309.8" stroke="#8c0650" stroke-width="1"/><path d="M290.02 211 L292.42 216.9 L290.02 216.9 Z" fill="#ff14a0"/><path d="M291.52 310.3 L293.52 310.3 L291.82 314.4 Z" fill="#f014a0"/><line x1="293.94" y1="213.5" x2="293.94" y2="309.8" stroke="#c80c74" stroke-width="1.1"/><line x1="295.54" y1="216.5" x2="295.54" y2="309.8" stroke="#8c0650" stroke-width="1"/><path d="M293.24 211 L295.64 216.9 L293.24 216.9 Z" fill="#ff14a0"/><path d="M294.74 310.3 L296.74 310.3 L295.04 314.4 Z" fill="#f014a0"/><line x1="297.16" y1="213.5" x2="297.16" y2="309.8" stroke="#c80c74" stroke-width="1.1"/><line x1="298.76" y1="216.5" x2="298.76" y2="309.8" stroke="#8c0650" stroke-width="1"/><path d="M296.46 211 L298.86 216.9 L296.46 216.9 Z" fill="#ff14a0"/><path d="M297.96 310.3 L299.96 310.3 L298.26 314.4 Z" fill="#f014a0"/><line x1="300.38" y1="213.5" x2="300.38" y2="309.8" stroke="#c80c74" stroke-width="1.1"/><line x1="301.98" y1="216.5" x2="301.98" y2="309.8" stroke="#8c0650" stroke-width="1"/><path d="M299.68 211 L302.08 216.9 L299.68 216.9 Z" fill="#ff14a0"/><path d="M301.18 310.3 L303.18 310.3 L301.48 314.4 Z" fill="#f014a0"/><line x1="303.6" y1="213.5" x2="303.6" y2="309.8" stroke="#c80c74" stroke-width="1.1"/><line x1="305.2" y1="216.5" x2="305.2" y2="309.8" stroke="#8c0650" stroke-width="1"/><path d="M302.9 211 L305.3 216.9 L302.9 216.9 Z" fill="#ff14a0"/><path d="M304.4 310.3 L306.4 310.3 L304.7 314.4 Z" fill="#f014a0"/><line x1="306.82" y1="213.5" x2="306.82" y2="309.8" stroke="#c80c74" stroke-width="1.1"/><line x1="308.42" y1="216.5" x2="308.42" y2="309.8" stroke="#8c0650" stroke-width="1"/><path d="M306.12 211 L308.52 216.9 L306.12 216.9 Z" fill="#ff14a0"/><path d="M307.62 310.3 L309.62 310.3 L307.92 314.4 Z" fill="#f014a0"/><line x1="310.04" y1="213.5" x2="310.04" y2="309.8" stroke="#c80c74" stroke-width="1.1"/><line x1="311.64" y1="216.5" x2="311.64" y2="309.8" stroke="#8c0650" stroke-width="1"/><path d="M309.34 211 L311.74 216.9 L309.34 216.9 Z" fill="#ff14a0"/><path d="M310.84 310.3 L312.84 310.3 L311.14 314.4 Z" fill="#f014a0"/><rect x="318.2" y="213.5" width="26.36" height="96.3" fill="#34031e"/><line x1="318.9" y1="213.5" x2="318.9" y2="309.8" stroke="#c80c74" stroke-width="1.1"/><line x1="320.5" y1="216.5" x2="320.5" y2="309.8" stroke="#8c0650" stroke-width="1"/><path d="M318.2 211 L320.6 216.9 L318.2 216.9 Z" fill="#ff14a0"/><path d="M319.7 310.3 L321.7 310.3 L320 314.4 Z" fill="#f014a0"/><line x1="322.12" y1="213.5" x2="322.12" y2="309.8" stroke="#c80c74" stroke-width="1.1"/><line x1="323.72" y1="216.5" x2="323.72" y2="309.8" stroke="#8c0650" stroke-width="1"/><path d="M321.42 211 L323.82 216.9 L321.42 216.9 Z" fill="#ff14a0"/><path d="M322.92 310.3 L324.92 310.3 L323.22 314.4 Z" fill="#f014a0"/><line x1="325.34" y1="213.5" x2="325.34" y2="309.8" stroke="#c80c74" stroke-width="1.1"/><line x1="326.94" y1="216.5" x2="326.94" y2="309.8" stroke="#8c0650" stroke-width="1"/><path d="M324.64 211 L327.04 216.9 L324.64 216.9 Z" fill="#ff14a0"/><path d="M326.14 310.3 L328.14 310.3 L326.44 314.4 Z" fill="#f014a0"/><line x1="328.56" y1="213.5" x2="328.56" y2="309.8" stroke="#c80c74" stroke-width="1.1"/><line x1="330.16" y1="216.5" x2="330.16" y2="309.8" stroke="#8c0650" stroke-width="1"/><path d="M327.86 211 L330.26 216.9 L327.86 216.9 Z" fill="#ff14a0"/><path d="M329.36 310.3 L331.36 310.3 L329.66 314.4 Z" fill="#f014a0"/><line x1="331.78" y1="213.5" x2="331.78" y2="309.8" stroke="#c80c74" stroke-width="1.1"/><line x1="333.38" y1="216.5" x2="333.38" y2="309.8" stroke="#8c0650" stroke-width="1"/><path d="M331.08 211 L333.48 216.9 L331.08 216.9 Z" fill="#ff14a0"/><path d="M332.58 310.3 L334.58 310.3 L332.88 314.4 Z" fill="#f014a0"/><line x1="335" y1="213.5" x2="335" y2="309.8" stroke="#c80c74" stroke-width="1.1"/><line x1="336.6" y1="216.5" x2="336.6" y2="309.8" stroke="#8c0650" stroke-width="1"/><path d="M334.3 211 L336.7 216.9 L334.3 216.9 Z" fill="#ff14a0"/><path d="M335.8 310.3 L337.8 310.3 L336.1 314.4 Z" fill="#f014a0"/><line x1="338.22" y1="213.5" x2="338.22" y2="309.8" stroke="#c80c74" stroke-width="1.1"/><line x1="339.82" y1="216.5" x2="339.82" y2="309.8" stroke="#8c0650" stroke-width="1"/><path d="M337.52 211 L339.92 216.9 L337.52 216.9 Z" fill="#ff14a0"/><path d="M339.02 310.3 L341.02 310.3 L339.32 314.4 Z" fill="#f014a0"/><line x1="341.44" y1="213.5" x2="341.44" y2="309.8" stroke="#c80c74" stroke-width="1.1"/><line x1="343.04" y1="216.5" x2="343.04" y2="309.8" stroke="#8c0650" stroke-width="1"/><path d="M340.74 211 L343.14 216.9 L340.74 216.9 Z" fill="#ff14a0"/><path d="M342.24 310.3 L344.24 310.3 L342.54 314.4 Z" fill="#f014a0"/><rect x="350" y="213.5" width="26.36" height="96.3" fill="#34031e"/><line x1="350.7" y1="213.5" x2="350.7" y2="309.8" stroke="#c80c74" stroke-width="1.1"/><line x1="352.3" y1="216.5" x2="352.3" y2="309.8" stroke="#8c0650" stroke-width="1"/><path d="M350 211 L352.4 216.9 L350 216.9 Z" fill="#ff14a0"/><path d="M351.5 310.3 L353.5 310.3 L351.8 314.4 Z" fill="#f014a0"/><line x1="353.92" y1="213.5" x2="353.92" y2="309.8" stroke="#c80c74" stroke-width="1.1"/><line x1="355.52" y1="216.5" x2="355.52" y2="309.8" stroke="#8c0650" stroke-width="1"/><path d="M353.22 211 L355.62 216.9 L353.22 216.9 Z" fill="#ff14a0"/><path d="M354.72 310.3 L356.72 310.3 L355.02 314.4 Z" fill="#f014a0"/><line x1="357.14" y1="213.5" x2="357.14" y2="309.8" stroke="#c80c74" stroke-width="1.1"/><line x1="358.74" y1="216.5" x2="358.74" y2="309.8" stroke="#8c0650" stroke-width="1"/><path d="M356.44 211 L358.84 216.9 L356.44 216.9 Z" fill="#ff14a0"/><path d="M357.94 310.3 L359.94 310.3 L358.24 314.4 Z" fill="#f014a0"/><line x1="360.36" y1="213.5" x2="360.36" y2="309.8" stroke="#c80c74" stroke-width="1.1"/><line x1="361.96" y1="216.5" x2="361.96" y2="309.8" stroke="#8c0650" stroke-width="1"/><path d="M359.66 211 L362.06 216.9 L359.66 216.9 Z" fill="#ff14a0"/><path d="M361.16 310.3 L363.16 310.3 L361.46 314.4 Z" fill="#f014a0"/><line x1="363.58" y1="213.5" x2="363.58" y2="309.8" stroke="#c80c74" stroke-width="1.1"/><line x1="365.18" y1="216.5" x2="365.18" y2="309.8" stroke="#8c0650" stroke-width="1"/><path d="M362.88 211 L365.28 216.9 L362.88 216.9 Z" fill="#ff14a0"/><path d="M364.38 310.3 L366.38 310.3 L364.68 314.4 Z" fill="#f014a0"/><line x1="366.8" y1="213.5" x2="366.8" y2="309.8" stroke="#c80c74" stroke-width="1.1"/><line x1="368.4" y1="216.5" x2="368.4" y2="309.8" stroke="#8c0650" stroke-width="1"/><path d="M366.1 211 L368.5 216.9 L366.1 216.9 Z" fill="#ff14a0"/><path d="M367.6 310.3 L369.6 310.3 L367.9 314.4 Z" fill="#f014a0"/><line x1="370.02" y1="213.5" x2="370.02" y2="309.8" stroke="#c80c74" stroke-width="1.1"/><line x1="371.62" y1="216.5" x2="371.62" y2="309.8" stroke="#8c0650" stroke-width="1"/><path d="M369.32 211 L371.72 216.9 L369.32 216.9 Z" fill="#ff14a0"/><path d="M370.82 310.3 L372.82 310.3 L371.12 314.4 Z" fill="#f014a0"/><line x1="373.24" y1="213.5" x2="373.24" y2="309.8" stroke="#c80c74" stroke-width="1.1"/><line x1="374.84" y1="216.5" x2="374.84" y2="309.8" stroke="#8c0650" stroke-width="1"/><path d="M372.54 211 L374.94 216.9 L372.54 216.9 Z" fill="#ff14a0"/><path d="M374.04 310.3 L376.04 310.3 L374.34 314.4 Z" fill="#f014a0"/><rect x="382.1" y="213.5" width="26.36" height="96.3" fill="#34031e"/><line x1="382.8" y1="213.5" x2="382.8" y2="309.8" stroke="#c80c74" stroke-width="1.1"/><line x1="384.4" y1="216.5" x2="384.4" y2="309.8" stroke="#8c0650" stroke-width="1"/><path d="M382.1 211 L384.5 216.9 L382.1 216.9 Z" fill="#ff14a0"/><path d="M383.6 310.3 L385.6 310.3 L383.9 314.4 Z" fill="#f014a0"/><line x1="386.02" y1="213.5" x2="386.02" y2="309.8" stroke="#c80c74" stroke-width="1.1"/><line x1="387.62" y1="216.5" x2="387.62" y2="309.8" stroke="#8c0650" stroke-width="1"/><path d="M385.32 211 L387.72 216.9 L385.32 216.9 Z" fill="#ff14a0"/><path d="M386.82 310.3 L388.82 310.3 L387.12 314.4 Z" fill="#f014a0"/><line x1="389.24" y1="213.5" x2="389.24" y2="309.8" stroke="#c80c74" stroke-width="1.1"/><line x1="390.84" y1="216.5" x2="390.84" y2="309.8" stroke="#8c0650" stroke-width="1"/><path d="M388.54 211 L390.94 216.9 L388.54 216.9 Z" fill="#ff14a0"/><path d="M390.04 310.3 L392.04 310.3 L390.34 314.4 Z" fill="#f014a0"/><line x1="392.46" y1="213.5" x2="392.46" y2="309.8" stroke="#c80c74" stroke-width="1.1"/><line x1="394.06" y1="216.5" x2="394.06" y2="309.8" stroke="#8c0650" stroke-width="1"/><path d="M391.76 211 L394.16 216.9 L391.76 216.9 Z" fill="#ff14a0"/><path d="M393.26 310.3 L395.26 310.3 L393.56 314.4 Z" fill="#f014a0"/><line x1="395.68" y1="213.5" x2="395.68" y2="309.8" stroke="#c80c74" stroke-width="1.1"/><line x1="397.28" y1="216.5" x2="397.28" y2="309.8" stroke="#8c0650" stroke-width="1"/><path d="M394.98 211 L397.38 216.9 L394.98 216.9 Z" fill="#ff14a0"/><path d="M396.48 310.3 L398.48 310.3 L396.78 314.4 Z" fill="#f014a0"/><line x1="398.9" y1="213.5" x2="398.9" y2="309.8" stroke="#c80c74" stroke-width="1.1"/><line x1="400.5" y1="216.5" x2="400.5" y2="309.8" stroke="#8c0650" stroke-width="1"/><path d="M398.2 211 L400.6 216.9 L398.2 216.9 Z" fill="#ff14a0"/><path d="M399.7 310.3 L401.7 310.3 L400 314.4 Z" fill="#f014a0"/><line x1="402.12" y1="213.5" x2="402.12" y2="309.8" stroke="#c80c74" stroke-width="1.1"/><line x1="403.72" y1="216.5" x2="403.72" y2="309.8" stroke="#8c0650" stroke-width="1"/><path d="M401.42 211 L403.82 216.9 L401.42 216.9 Z" fill="#ff14a0"/><path d="M402.92 310.3 L404.92 310.3 L403.22 314.4 Z" fill="#f014a0"/><line x1="405.34" y1="213.5" x2="405.34" y2="309.8" stroke="#c80c74" stroke-width="1.1"/><line x1="406.94" y1="216.5" x2="406.94" y2="309.8" stroke="#8c0650" stroke-width="1"/><path d="M404.64 211 L407.04 216.9 L404.64 216.9 Z" fill="#ff14a0"/><path d="M406.14 310.3 L408.14 310.3 L406.44 314.4 Z" fill="#f014a0"/><rect x="413.9" y="213.5" width="26.36" height="96.3" fill="#34031e"/><line x1="414.6" y1="213.5" x2="414.6" y2="309.8" stroke="#c80c74" stroke-width="1.1"/><line x1="416.2" y1="216.5" x2="416.2" y2="309.8" stroke="#8c0650" stroke-width="1"/><path d="M413.9 211 L416.3 216.9 L413.9 216.9 Z" fill="#ff14a0"/><path d="M415.4 310.3 L417.4 310.3 L415.7 314.4 Z" fill="#f014a0"/><line x1="417.82" y1="213.5" x2="417.82" y2="309.8" stroke="#c80c74" stroke-width="1.1"/><line x1="419.42" y1="216.5" x2="419.42" y2="309.8" stroke="#8c0650" stroke-width="1"/><path d="M417.12 211 L419.52 216.9 L417.12 216.9 Z" fill="#ff14a0"/><path d="M418.62 310.3 L420.62 310.3 L418.92 314.4 Z" fill="#f014a0"/><line x1="421.04" y1="213.5" x2="421.04" y2="309.8" stroke="#c80c74" stroke-width="1.1"/><line x1="422.64" y1="216.5" x2="422.64" y2="309.8" stroke="#8c0650" stroke-width="1"/><path d="M420.34 211 L422.74 216.9 L420.34 216.9 Z" fill="#ff14a0"/><path d="M421.84 310.3 L423.84 310.3 L422.14 314.4 Z" fill="#f014a0"/><line x1="424.26" y1="213.5" x2="424.26" y2="309.8" stroke="#c80c74" stroke-width="1.1"/><line x1="425.86" y1="216.5" x2="425.86" y2="309.8" stroke="#8c0650" stroke-width="1"/><path d="M423.56 211 L425.96 216.9 L423.56 216.9 Z" fill="#ff14a0"/><path d="M425.06 310.3 L427.06 310.3 L425.36 314.4 Z" fill="#f014a0"/><line x1="427.48" y1="213.5" x2="427.48" y2="309.8" stroke="#c80c74" stroke-width="1.1"/><line x1="429.08" y1="216.5" x2="429.08" y2="309.8" stroke="#8c0650" stroke-width="1"/><path d="M426.78 211 L429.18 216.9 L426.78 216.9 Z" fill="#ff14a0"/><path d="M428.28 310.3 L430.28 310.3 L428.58 314.4 Z" fill="#f014a0"/><line x1="430.7" y1="213.5" x2="430.7" y2="309.8" stroke="#c80c74" stroke-width="1.1"/><line x1="432.3" y1="216.5" x2="432.3" y2="309.8" stroke="#8c0650" stroke-width="1"/><path d="M430 211 L432.4 216.9 L430 216.9 Z" fill="#ff14a0"/><path d="M431.5 310.3 L433.5 310.3 L431.8 314.4 Z" fill="#f014a0"/><line x1="433.92" y1="213.5" x2="433.92" y2="309.8" stroke="#c80c74" stroke-width="1.1"/><line x1="435.52" y1="216.5" x2="435.52" y2="309.8" stroke="#8c0650" stroke-width="1"/><path d="M433.22 211 L435.62 216.9 L433.22 216.9 Z" fill="#ff14a0"/><path d="M434.72 310.3 L436.72 310.3 L435.02 314.4 Z" fill="#f014a0"/><line x1="437.14" y1="213.5" x2="437.14" y2="309.8" stroke="#c80c74" stroke-width="1.1"/><line x1="438.74" y1="216.5" x2="438.74" y2="309.8" stroke="#8c0650" stroke-width="1"/><path d="M436.44 211 L438.84 216.9 L436.44 216.9 Z" fill="#ff14a0"/><path d="M437.94 310.3 L439.94 310.3 L438.24 314.4 Z" fill="#f014a0"/><rect x="446" y="213.5" width="26.36" height="96.3" fill="#34031e"/><line x1="446.7" y1="213.5" x2="446.7" y2="309.8" stroke="#c80c74" stroke-width="1.1"/><line x1="448.3" y1="216.5" x2="448.3" y2="309.8" stroke="#8c0650" stroke-width="1"/><path d="M446 211 L448.4 216.9 L446 216.9 Z" fill="#ff14a0"/><path d="M447.5 310.3 L449.5 310.3 L447.8 314.4 Z" fill="#f014a0"/><line x1="449.92" y1="213.5" x2="449.92" y2="309.8" stroke="#c80c74" stroke-width="1.1"/><line x1="451.52" y1="216.5" x2="451.52" y2="309.8" stroke="#8c0650" stroke-width="1"/><path d="M449.22 211 L451.62 216.9 L449.22 216.9 Z" fill="#ff14a0"/><path d="M450.72 310.3 L452.72 310.3 L451.02 314.4 Z" fill="#f014a0"/><line x1="453.14" y1="213.5" x2="453.14" y2="309.8" stroke="#c80c74" stroke-width="1.1"/><line x1="454.74" y1="216.5" x2="454.74" y2="309.8" stroke="#8c0650" stroke-width="1"/><path d="M452.44 211 L454.84 216.9 L452.44 216.9 Z" fill="#ff14a0"/><path d="M453.94 310.3 L455.94 310.3 L454.24 314.4 Z" fill="#f014a0"/><line x1="456.36" y1="213.5" x2="456.36" y2="309.8" stroke="#c80c74" stroke-width="1.1"/><line x1="457.96" y1="216.5" x2="457.96" y2="309.8" stroke="#8c0650" stroke-width="1"/><path d="M455.66 211 L458.06 216.9 L455.66 216.9 Z" fill="#ff14a0"/><path d="M457.16 310.3 L459.16 310.3 L457.46 314.4 Z" fill="#f014a0"/><line x1="459.58" y1="213.5" x2="459.58" y2="309.8" stroke="#c80c74" stroke-width="1.1"/><line x1="461.18" y1="216.5" x2="461.18" y2="309.8" stroke="#8c0650" stroke-width="1"/><path d="M458.88 211 L461.28 216.9 L458.88 216.9 Z" fill="#ff14a0"/><path d="M460.38 310.3 L462.38 310.3 L460.68 314.4 Z" fill="#f014a0"/><line x1="462.8" y1="213.5" x2="462.8" y2="309.8" stroke="#c80c74" stroke-width="1.1"/><line x1="464.4" y1="216.5" x2="464.4" y2="309.8" stroke="#8c0650" stroke-width="1"/><path d="M462.1 211 L464.5 216.9 L462.1 216.9 Z" fill="#ff14a0"/><path d="M463.6 310.3 L465.6 310.3 L463.9 314.4 Z" fill="#f014a0"/><line x1="466.02" y1="213.5" x2="466.02" y2="309.8" stroke="#c80c74" stroke-width="1.1"/><line x1="467.62" y1="216.5" x2="467.62" y2="309.8" stroke="#8c0650" stroke-width="1"/><path d="M465.32 211 L467.72 216.9 L465.32 216.9 Z" fill="#ff14a0"/><path d="M466.82 310.3 L468.82 310.3 L467.12 314.4 Z" fill="#f014a0"/><line x1="469.24" y1="213.5" x2="469.24" y2="309.8" stroke="#c80c74" stroke-width="1.1"/><line x1="470.84" y1="216.5" x2="470.84" y2="309.8" stroke="#8c0650" stroke-width="1"/><path d="M468.54 211 L470.94 216.9 L468.54 216.9 Z" fill="#ff14a0"/><path d="M470.04 310.3 L472.04 310.3 L470.34 314.4 Z" fill="#f014a0"/><rect x="477.5" y="213.5" width="26.36" height="96.3" fill="#34031e"/><line x1="478.2" y1="213.5" x2="478.2" y2="309.8" stroke="#c80c74" stroke-width="1.1"/><line x1="479.8" y1="216.5" x2="479.8" y2="309.8" stroke="#8c0650" stroke-width="1"/><path d="M477.5 211 L479.9 216.9 L477.5 216.9 Z" fill="#ff14a0"/><path d="M479 310.3 L481 310.3 L479.3 314.4 Z" fill="#f014a0"/><line x1="481.42" y1="213.5" x2="481.42" y2="309.8" stroke="#c80c74" stroke-width="1.1"/><line x1="483.02" y1="216.5" x2="483.02" y2="309.8" stroke="#8c0650" stroke-width="1"/><path d="M480.72 211 L483.12 216.9 L480.72 216.9 Z" fill="#ff14a0"/><path d="M482.22 310.3 L484.22 310.3 L482.52 314.4 Z" fill="#f014a0"/><line x1="484.64" y1="213.5" x2="484.64" y2="309.8" stroke="#c80c74" stroke-width="1.1"/><line x1="486.24" y1="216.5" x2="486.24" y2="309.8" stroke="#8c0650" stroke-width="1"/><path d="M483.94 211 L486.34 216.9 L483.94 216.9 Z" fill="#ff14a0"/><path d="M485.44 310.3 L487.44 310.3 L485.74 314.4 Z" fill="#f014a0"/><line x1="487.86" y1="213.5" x2="487.86" y2="309.8" stroke="#c80c74" stroke-width="1.1"/><line x1="489.46" y1="216.5" x2="489.46" y2="309.8" stroke="#8c0650" stroke-width="1"/><path d="M487.16 211 L489.56 216.9 L487.16 216.9 Z" fill="#ff14a0"/><path d="M488.66 310.3 L490.66 310.3 L488.96 314.4 Z" fill="#f014a0"/><line x1="491.08" y1="213.5" x2="491.08" y2="309.8" stroke="#c80c74" stroke-width="1.1"/><line x1="492.68" y1="216.5" x2="492.68" y2="309.8" stroke="#8c0650" stroke-width="1"/><path d="M490.38 211 L492.78 216.9 L490.38 216.9 Z" fill="#ff14a0"/><path d="M491.88 310.3 L493.88 310.3 L492.18 314.4 Z" fill="#f014a0"/><line x1="494.3" y1="213.5" x2="494.3" y2="309.8" stroke="#c80c74" stroke-width="1.1"/><line x1="495.9" y1="216.5" x2="495.9" y2="309.8" stroke="#8c0650" stroke-width="1"/><path d="M493.6 211 L496 216.9 L493.6 216.9 Z" fill="#ff14a0"/><path d="M495.1 310.3 L497.1 310.3 L495.4 314.4 Z" fill="#f014a0"/><line x1="497.52" y1="213.5" x2="497.52" y2="309.8" stroke="#c80c74" stroke-width="1.1"/><line x1="499.12" y1="216.5" x2="499.12" y2="309.8" stroke="#8c0650" stroke-width="1"/><path d="M496.82 211 L499.22 216.9 L496.82 216.9 Z" fill="#ff14a0"/><path d="M498.32 310.3 L500.32 310.3 L498.62 314.4 Z" fill="#f014a0"/><line x1="500.74" y1="213.5" x2="500.74" y2="309.8" stroke="#c80c74" stroke-width="1.1"/><line x1="502.34" y1="216.5" x2="502.34" y2="309.8" stroke="#8c0650" stroke-width="1"/><path d="M500.04 211 L502.44 216.9 L500.04 216.9 Z" fill="#ff14a0"/><path d="M501.54 310.3 L503.54 310.3 L501.84 314.4 Z" fill="#f014a0"/><rect x="508.9" y="213.5" width="26.36" height="96.3" fill="#34031e"/><line x1="509.6" y1="213.5" x2="509.6" y2="309.8" stroke="#c80c74" stroke-width="1.1"/><line x1="511.2" y1="216.5" x2="511.2" y2="309.8" stroke="#8c0650" stroke-width="1"/><path d="M508.9 211 L511.3 216.9 L508.9 216.9 Z" fill="#ff14a0"/><path d="M510.4 310.3 L512.4 310.3 L510.7 314.4 Z" fill="#f014a0"/><line x1="512.82" y1="213.5" x2="512.82" y2="309.8" stroke="#c80c74" stroke-width="1.1"/><line x1="514.42" y1="216.5" x2="514.42" y2="309.8" stroke="#8c0650" stroke-width="1"/><path d="M512.12 211 L514.52 216.9 L512.12 216.9 Z" fill="#ff14a0"/><path d="M513.62 310.3 L515.62 310.3 L513.92 314.4 Z" fill="#f014a0"/><line x1="516.04" y1="213.5" x2="516.04" y2="309.8" stroke="#c80c74" stroke-width="1.1"/><line x1="517.64" y1="216.5" x2="517.64" y2="309.8" stroke="#8c0650" stroke-width="1"/><path d="M515.34 211 L517.74 216.9 L515.34 216.9 Z" fill="#ff14a0"/><path d="M516.84 310.3 L518.84 310.3 L517.14 314.4 Z" fill="#f014a0"/><line x1="519.26" y1="213.5" x2="519.26" y2="309.8" stroke="#c80c74" stroke-width="1.1"/><line x1="520.86" y1="216.5" x2="520.86" y2="309.8" stroke="#8c0650" stroke-width="1"/><path d="M518.56 211 L520.96 216.9 L518.56 216.9 Z" fill="#ff14a0"/><path d="M520.06 310.3 L522.06 310.3 L520.36 314.4 Z" fill="#f014a0"/><line x1="522.48" y1="213.5" x2="522.48" y2="309.8" stroke="#c80c74" stroke-width="1.1"/><line x1="524.08" y1="216.5" x2="524.08" y2="309.8" stroke="#8c0650" stroke-width="1"/><path d="M521.78 211 L524.18 216.9 L521.78 216.9 Z" fill="#ff14a0"/><path d="M523.28 310.3 L525.28 310.3 L523.58 314.4 Z" fill="#f014a0"/><line x1="525.7" y1="213.5" x2="525.7" y2="309.8" stroke="#c80c74" stroke-width="1.1"/><line x1="527.3" y1="216.5" x2="527.3" y2="309.8" stroke="#8c0650" stroke-width="1"/><path d="M525 211 L527.4 216.9 L525 216.9 Z" fill="#ff14a0"/><path d="M526.5 310.3 L528.5 310.3 L526.8 314.4 Z" fill="#f014a0"/><line x1="528.92" y1="213.5" x2="528.92" y2="309.8" stroke="#c80c74" stroke-width="1.1"/><line x1="530.52" y1="216.5" x2="530.52" y2="309.8" stroke="#8c0650" stroke-width="1"/><path d="M528.22 211 L530.62 216.9 L528.22 216.9 Z" fill="#ff14a0"/><path d="M529.72 310.3 L531.72 310.3 L530.02 314.4 Z" fill="#f014a0"/><line x1="532.14" y1="213.5" x2="532.14" y2="309.8" stroke="#c80c74" stroke-width="1.1"/><line x1="533.74" y1="216.5" x2="533.74" y2="309.8" stroke="#8c0650" stroke-width="1"/><path d="M531.44 211 L533.84 216.9 L531.44 216.9 Z" fill="#ff14a0"/><path d="M532.94 310.3 L534.94 310.3 L533.24 314.4 Z" fill="#f014a0"/><rect x="540.7" y="213.5" width="26.36" height="96.3" fill="#34031e"/><line x1="541.4" y1="213.5" x2="541.4" y2="309.8" stroke="#c80c74" stroke-width="1.1"/><line x1="543" y1="216.5" x2="543" y2="309.8" stroke="#8c0650" stroke-width="1"/><path d="M540.7 211 L543.1 216.9 L540.7 216.9 Z" fill="#ff14a0"/><path d="M542.2 310.3 L544.2 310.3 L542.5 314.4 Z" fill="#f014a0"/><line x1="544.62" y1="213.5" x2="544.62" y2="309.8" stroke="#c80c74" stroke-width="1.1"/><line x1="546.22" y1="216.5" x2="546.22" y2="309.8" stroke="#8c0650" stroke-width="1"/><path d="M543.92 211 L546.32 216.9 L543.92 216.9 Z" fill="#ff14a0"/><path d="M545.42 310.3 L547.42 310.3 L545.72 314.4 Z" fill="#f014a0"/><line x1="547.84" y1="213.5" x2="547.84" y2="309.8" stroke="#c80c74" stroke-width="1.1"/><line x1="549.44" y1="216.5" x2="549.44" y2="309.8" stroke="#8c0650" stroke-width="1"/><path d="M547.14 211 L549.54 216.9 L547.14 216.9 Z" fill="#ff14a0"/><path d="M548.64 310.3 L550.64 310.3 L548.94 314.4 Z" fill="#f014a0"/><line x1="551.06" y1="213.5" x2="551.06" y2="309.8" stroke="#c80c74" stroke-width="1.1"/><line x1="552.66" y1="216.5" x2="552.66" y2="309.8" stroke="#8c0650" stroke-width="1"/><path d="M550.36 211 L552.76 216.9 L550.36 216.9 Z" fill="#ff14a0"/><path d="M551.86 310.3 L553.86 310.3 L552.16 314.4 Z" fill="#f014a0"/><line x1="554.28" y1="213.5" x2="554.28" y2="309.8" stroke="#c80c74" stroke-width="1.1"/><line x1="555.88" y1="216.5" x2="555.88" y2="309.8" stroke="#8c0650" stroke-width="1"/><path d="M553.58 211 L555.98 216.9 L553.58 216.9 Z" fill="#ff14a0"/><path d="M555.08 310.3 L557.08 310.3 L555.38 314.4 Z" fill="#f014a0"/><line x1="557.5" y1="213.5" x2="557.5" y2="309.8" stroke="#c80c74" stroke-width="1.1"/><line x1="559.1" y1="216.5" x2="559.1" y2="309.8" stroke="#8c0650" stroke-width="1"/><path d="M556.8 211 L559.2 216.9 L556.8 216.9 Z" fill="#ff14a0"/><path d="M558.3 310.3 L560.3 310.3 L558.6 314.4 Z" fill="#f014a0"/><line x1="560.72" y1="213.5" x2="560.72" y2="309.8" stroke="#c80c74" stroke-width="1.1"/><line x1="562.32" y1="216.5" x2="562.32" y2="309.8" stroke="#8c0650" stroke-width="1"/><path d="M560.02 211 L562.42 216.9 L560.02 216.9 Z" fill="#ff14a0"/><path d="M561.52 310.3 L563.52 310.3 L561.82 314.4 Z" fill="#f014a0"/><line x1="563.94" y1="213.5" x2="563.94" y2="309.8" stroke="#c80c74" stroke-width="1.1"/><line x1="565.54" y1="216.5" x2="565.54" y2="309.8" stroke="#8c0650" stroke-width="1"/><path d="M563.24 211 L565.64 216.9 L563.24 216.9 Z" fill="#ff14a0"/><path d="M564.74 310.3 L566.74 310.3 L565.04 314.4 Z" fill="#f014a0"/><rect x="572.9" y="213.5" width="26.36" height="96.3" fill="#34031e"/><line x1="573.6" y1="213.5" x2="573.6" y2="309.8" stroke="#c80c74" stroke-width="1.1"/><line x1="575.2" y1="216.5" x2="575.2" y2="309.8" stroke="#8c0650" stroke-width="1"/><path d="M572.9 211 L575.3 216.9 L572.9 216.9 Z" fill="#ff14a0"/><path d="M574.4 310.3 L576.4 310.3 L574.7 314.4 Z" fill="#f014a0"/><line x1="576.82" y1="213.5" x2="576.82" y2="309.8" stroke="#c80c74" stroke-width="1.1"/><line x1="578.42" y1="216.5" x2="578.42" y2="309.8" stroke="#8c0650" stroke-width="1"/><path d="M576.12 211 L578.52 216.9 L576.12 216.9 Z" fill="#ff14a0"/><path d="M577.62 310.3 L579.62 310.3 L577.92 314.4 Z" fill="#f014a0"/><line x1="580.04" y1="213.5" x2="580.04" y2="309.8" stroke="#c80c74" stroke-width="1.1"/><line x1="581.64" y1="216.5" x2="581.64" y2="309.8" stroke="#8c0650" stroke-width="1"/><path d="M579.34 211 L581.74 216.9 L579.34 216.9 Z" fill="#ff14a0"/><path d="M580.84 310.3 L582.84 310.3 L581.14 314.4 Z" fill="#f014a0"/><line x1="583.26" y1="213.5" x2="583.26" y2="309.8" stroke="#c80c74" stroke-width="1.1"/><line x1="584.86" y1="216.5" x2="584.86" y2="309.8" stroke="#8c0650" stroke-width="1"/><path d="M582.56 211 L584.96 216.9 L582.56 216.9 Z" fill="#ff14a0"/><path d="M584.06 310.3 L586.06 310.3 L584.36 314.4 Z" fill="#f014a0"/><line x1="586.48" y1="213.5" x2="586.48" y2="309.8" stroke="#c80c74" stroke-width="1.1"/><line x1="588.08" y1="216.5" x2="588.08" y2="309.8" stroke="#8c0650" stroke-width="1"/><path d="M585.78 211 L588.18 216.9 L585.78 216.9 Z" fill="#ff14a0"/><path d="M587.28 310.3 L589.28 310.3 L587.58 314.4 Z" fill="#f014a0"/><line x1="589.7" y1="213.5" x2="589.7" y2="309.8" stroke="#c80c74" stroke-width="1.1"/><line x1="591.3" y1="216.5" x2="591.3" y2="309.8" stroke="#8c0650" stroke-width="1"/><path d="M589 211 L591.4 216.9 L589 216.9 Z" fill="#ff14a0"/><path d="M590.5 310.3 L592.5 310.3 L590.8 314.4 Z" fill="#f014a0"/><line x1="592.92" y1="213.5" x2="592.92" y2="309.8" stroke="#c80c74" stroke-width="1.1"/><line x1="594.52" y1="216.5" x2="594.52" y2="309.8" stroke="#8c0650" stroke-width="1"/><path d="M592.22 211 L594.62 216.9 L592.22 216.9 Z" fill="#ff14a0"/><path d="M593.72 310.3 L595.72 310.3 L594.02 314.4 Z" fill="#f014a0"/><line x1="596.14" y1="213.5" x2="596.14" y2="309.8" stroke="#c80c74" stroke-width="1.1"/><line x1="597.74" y1="216.5" x2="597.74" y2="309.8" stroke="#8c0650" stroke-width="1"/><path d="M595.44 211 L597.84 216.9 L595.44 216.9 Z" fill="#ff14a0"/><path d="M596.94 310.3 L598.94 310.3 L597.24 314.4 Z" fill="#f014a0"/><rect x="604.6" y="213.5" width="26.36" height="96.3" fill="#34031e"/><line x1="605.3" y1="213.5" x2="605.3" y2="309.8" stroke="#c80c74" stroke-width="1.1"/><line x1="606.9" y1="216.5" x2="606.9" y2="309.8" stroke="#8c0650" stroke-width="1"/><path d="M604.6 211 L607 216.9 L604.6 216.9 Z" fill="#ff14a0"/><path d="M606.1 310.3 L608.1 310.3 L606.4 314.4 Z" fill="#f014a0"/><line x1="608.52" y1="213.5" x2="608.52" y2="309.8" stroke="#c80c74" stroke-width="1.1"/><line x1="610.12" y1="216.5" x2="610.12" y2="309.8" stroke="#8c0650" stroke-width="1"/><path d="M607.82 211 L610.22 216.9 L607.82 216.9 Z" fill="#ff14a0"/><path d="M609.32 310.3 L611.32 310.3 L609.62 314.4 Z" fill="#f014a0"/><line x1="611.74" y1="213.5" x2="611.74" y2="309.8" stroke="#c80c74" stroke-width="1.1"/><line x1="613.34" y1="216.5" x2="613.34" y2="309.8" stroke="#8c0650" stroke-width="1"/><path d="M611.04 211 L613.44 216.9 L611.04 216.9 Z" fill="#ff14a0"/><path d="M612.54 310.3 L614.54 310.3 L612.84 314.4 Z" fill="#f014a0"/><line x1="614.96" y1="213.5" x2="614.96" y2="309.8" stroke="#c80c74" stroke-width="1.1"/><line x1="616.56" y1="216.5" x2="616.56" y2="309.8" stroke="#8c0650" stroke-width="1"/><path d="M614.26 211 L616.66 216.9 L614.26 216.9 Z" fill="#ff14a0"/><path d="M615.76 310.3 L617.76 310.3 L616.06 314.4 Z" fill="#f014a0"/><line x1="618.18" y1="213.5" x2="618.18" y2="309.8" stroke="#c80c74" stroke-width="1.1"/><line x1="619.78" y1="216.5" x2="619.78" y2="309.8" stroke="#8c0650" stroke-width="1"/><path d="M617.48 211 L619.88 216.9 L617.48 216.9 Z" fill="#ff14a0"/><path d="M618.98 310.3 L620.98 310.3 L619.28 314.4 Z" fill="#f014a0"/><line x1="621.4" y1="213.5" x2="621.4" y2="309.8" stroke="#c80c74" stroke-width="1.1"/><line x1="623" y1="216.5" x2="623" y2="309.8" stroke="#8c0650" stroke-width="1"/><path d="M620.7 211 L623.1 216.9 L620.7 216.9 Z" fill="#ff14a0"/><path d="M622.2 310.3 L624.2 310.3 L622.5 314.4 Z" fill="#f014a0"/><line x1="624.62" y1="213.5" x2="624.62" y2="309.8" stroke="#c80c74" stroke-width="1.1"/><line x1="626.22" y1="216.5" x2="626.22" y2="309.8" stroke="#8c0650" stroke-width="1"/><path d="M623.92 211 L626.32 216.9 L623.92 216.9 Z" fill="#ff14a0"/><path d="M625.42 310.3 L627.42 310.3 L625.72 314.4 Z" fill="#f014a0"/><line x1="627.84" y1="213.5" x2="627.84" y2="309.8" stroke="#c80c74" stroke-width="1.1"/><line x1="629.44" y1="216.5" x2="629.44" y2="309.8" stroke="#8c0650" stroke-width="1"/><path d="M627.14 211 L629.54 216.9 L627.14 216.9 Z" fill="#ff14a0"/><path d="M628.64 310.3 L630.64 310.3 L628.94 314.4 Z" fill="#f014a0"/><rect x="94.3" y="242.5" width="29.26" height="38.8" fill="#161b3e" style="mix-blend-mode:screen"/><rect x="126.4" y="242.5" width="29.26" height="38.8" fill="#161b3e" style="mix-blend-mode:screen"/><rect x="158.4" y="242.5" width="29.26" height="38.8" fill="#161b3e" style="mix-blend-mode:screen"/><rect x="190.5" y="242.5" width="29.26" height="38.8" fill="#161b3e" style="mix-blend-mode:screen"/><rect x="221.6" y="242.5" width="29.26" height="38.8" fill="#161b3e" style="mix-blend-mode:screen"/><rect x="254.5" y="242.5" width="29.26" height="38.8" fill="#161b3e" style="mix-blend-mode:screen"/><rect x="286.3" y="242.5" width="29.26" height="38.8" fill="#161b3e" style="mix-blend-mode:screen"/><rect x="317.7" y="242.5" width="29.26" height="38.8" fill="#161b3e" style="mix-blend-mode:screen"/><rect x="349.5" y="242.5" width="29.26" height="38.8" fill="#161b3e" style="mix-blend-mode:screen"/><rect x="381.6" y="242.5" width="29.26" height="38.8" fill="#161b3e" style="mix-blend-mode:screen"/><rect x="413.4" y="242.5" width="29.26" height="38.8" fill="#161b3e" style="mix-blend-mode:screen"/><rect x="445.5" y="242.5" width="29.26" height="38.8" fill="#161b3e" style="mix-blend-mode:screen"/><rect x="477" y="242.5" width="29.26" height="38.8" fill="#161b3e" style="mix-blend-mode:screen"/><rect x="508.4" y="242.5" width="29.26" height="38.8" fill="#161b3e" style="mix-blend-mode:screen"/><rect x="540.2" y="242.5" width="29.26" height="38.8" fill="#161b3e" style="mix-blend-mode:screen"/><rect x="572.4" y="242.5" width="29.26" height="38.8" fill="#161b3e" style="mix-blend-mode:screen"/><rect x="604.1" y="242.5" width="29.26" height="38.8" fill="#161b3e" style="mix-blend-mode:screen"/></g><rect x="51" y="308" width="625" height="3.3" fill="#ff0c98"/><rect x="253.75" y="311" width="0.92" height="1.58" fill="#d00c80"/><rect x="97.13" y="306.6" width="1.12" height="0.97" fill="#c00a78"/><rect x="88.13" y="311" width="1.21" height="0.84" fill="#d00c80"/><rect x="322.16" y="306.6" width="0.84" height="0.69" fill="#c00a78"/><rect x="316.48" y="311" width="1.46" height="0.95" fill="#d00c80"/><rect x="191.08" y="306.6" width="1.18" height="1.55" fill="#c00a78"/><rect x="411.54" y="311" width="1.12" height="1.97" fill="#d00c80"/><rect x="81.02" y="306.6" width="1.32" height="0.89" fill="#c00a78"/><rect x="141.87" y="311" width="0.89" height="1.17" fill="#d00c80"/><rect x="560.45" y="306.6" width="0.91" height="1.18" fill="#c00a78"/><rect x="450.04" y="311" width="1.1" height="1.46" fill="#d00c80"/><rect x="91.12" y="306.6" width="0.84" height="0.81" fill="#c00a78"/><rect x="475.89" y="311" width="1.14" height="1.18" fill="#d00c80"/><rect x="416.81" y="306.6" width="1.07" height="0.9" fill="#c00a78"/><rect x="546.9" y="311" width="1.36" height="1.09" fill="#d00c80"/><rect x="409.87" y="306.6" width="1.12" height="1.48" fill="#c00a78"/><rect x="506.44" y="311" width="1.03" height="1.98" fill="#d00c80"/><rect x="125.55" y="306.6" width="1.05" height="1.36" fill="#c00a78"/><rect x="146.69" y="311" width="1.19" height="0.85" fill="#d00c80"/><rect x="468.3" y="306.6" width="1.26" height="1.17" fill="#c00a78"/><rect x="597.42" y="311" width="1.05" height="1.63" fill="#d00c80"/><rect x="422.29" y="306.6" width="1.15" height="1.06" fill="#c00a78"/><rect x="575.3" y="311" width="1.56" height="1.37" fill="#d00c80"/><rect x="465.77" y="306.6" width="0.84" height="1.3" fill="#c00a78"/><rect x="455.16" y="311" width="1.59" height="1.79" fill="#d00c80"/><rect x="229.3" y="306.6" width="1.03" height="1.27" fill="#c00a78"/><rect x="66.06" y="311" width="1.17" height="1" fill="#d00c80"/><rect x="124.95" y="306.6" width="0.84" height="1.37" fill="#c00a78"/><rect x="132.58" y="311" width="1" height="1.27" fill="#d00c80"/><rect x="594.9" y="306.6" width="0.85" height="1.05" fill="#c00a78"/><rect x="394.3" y="311" width="1.51" height="1.78" fill="#d00c80"/><rect x="590.26" y="306.6" width="0.97" height="1.02" fill="#c00a78"/><rect x="275.51" y="311" width="1.51" height="1.95" fill="#d00c80"/><rect x="146.02" y="306.6" width="0.91" height="0.83" fill="#c00a78"/><rect x="197.37" y="311" width="1.19" height="1.51" fill="#d00c80"/><rect x="215.69" y="306.6" width="0.8" height="1.02" fill="#c00a78"/><rect x="282.04" y="311" width="1.25" height="1.94" fill="#d00c80"/><rect x="482.18" y="306.6" width="1.11" height="1.22" fill="#c00a78"/><rect x="473.27" y="311" width="0.84" height="1.88" fill="#d00c80"/><rect x="537.92" y="306.6" width="1.32" height="1.4" fill="#c00a78"/><rect x="296.45" y="311" width="1.12" height="0.92" fill="#d00c80"/><rect x="447.16" y="306.6" width="0.84" height="0.67" fill="#c00a78"/><rect x="182.06" y="311" width="0.93" height="1.21" fill="#d00c80"/><rect x="84.75" y="306.6" width="0.8" height="0.75" fill="#c00a78"/><rect x="115.21" y="311" width="1.09" height="0.83" fill="#d00c80"/><rect x="596.71" y="306.6" width="1.17" height="0.75" fill="#c00a78"/><rect x="209.16" y="311" width="1.08" height="1.24" fill="#d00c80"/><rect x="128.53" y="306.6" width="1.31" height="1.59" fill="#c00a78"/><rect x="342.31" y="311" width="1.19" height="0.9" fill="#d00c80"/><rect x="115.66" y="306.6" width="1.01" height="0.86" fill="#c00a78"/><rect x="568.38" y="311" width="0.93" height="0.83" fill="#d00c80"/><rect x="644.46" y="306.6" width="1.12" height="0.75" fill="#c00a78"/><rect x="390.4" y="311" width="0.82" height="1.43" fill="#d00c80"/><rect x="661.61" y="306.6" width="1.32" height="1.3" fill="#c00a78"/><rect x="214.67" y="311" width="1.09" height="1" fill="#d00c80"/><rect x="532.92" y="306.6" width="1.12" height="1.38" fill="#c00a78"/><rect x="257.38" y="311" width="0.98" height="1.77" fill="#d00c80"/><rect x="665.61" y="306.6" width="1.31" height="1.41" fill="#c00a78"/><rect x="561.82" y="311" width="1.39" height="1.07" fill="#d00c80"/><rect x="374.49" y="306.6" width="1.01" height="0.63" fill="#c00a78"/><rect x="69.4" y="311" width="1.02" height="1.11" fill="#d00c80"/><rect x="483.44" y="306.6" width="1.37" height="1.05" fill="#c00a78"/><rect x="635.76" y="311" width="1.59" height="1.95" fill="#d00c80"/><rect x="279.17" y="306.6" width="0.93" height="0.83" fill="#c00a78"/><rect x="174.55" y="311" width="0.96" height="1.55" fill="#d00c80"/><rect x="612.89" y="306.6" width="1.3" height="1.08" fill="#c00a78"/><rect x="458.81" y="311" width="1.44" height="0.9" fill="#d00c80"/><rect x="463.54" y="306.6" width="1.35" height="1.38" fill="#c00a78"/><rect x="519.34" y="311" width="1.18" height="1.01" fill="#d00c80"/><rect x="543.63" y="306.6" width="1" height="1.4" fill="#c00a78"/><rect x="657.34" y="311" width="1.12" height="1.28" fill="#d00c80"/><rect x="641.85" y="306.6" width="1.23" height="0.77" fill="#c00a78"/><rect x="131.14" y="311" width="0.92" height="1.89" fill="#d00c80"/><rect x="554.45" y="306.6" width="0.89" height="1.43" fill="#c00a78"/><rect x="662.73" y="311" width="1.33" height="1.22" fill="#d00c80"/><rect x="393.82" y="306.6" width="0.88" height="0.61" fill="#c00a78"/><rect x="656.86" y="311" width="1.32" height="1.43" fill="#d00c80"/><rect x="633.65" y="306.6" width="1.06" height="1.47" fill="#c00a78"/><rect x="566.69" y="311" width="0.97" height="1.1" fill="#d00c80"/><rect x="234.52" y="306.6" width="0.94" height="1.19" fill="#c00a78"/><rect x="213.58" y="311" width="1.14" height="0.96" fill="#d00c80"/><rect x="618.94" y="306.6" width="1.01" height="1.06" fill="#c00a78"/><rect x="415.43" y="311" width="1.52" height="1.3" fill="#d00c80"/><rect x="623.74" y="306.6" width="1.1" height="1.13" fill="#c00a78"/><rect x="378.14" y="311" width="0.81" height="1.33" fill="#d00c80"/><rect x="166.08" y="306.6" width="0.8" height="1.4" fill="#c00a78"/><rect x="159.37" y="311" width="1.18" height="1.67" fill="#d00c80"/><rect x="398.68" y="306.6" width="1" height="1.12" fill="#c00a78"/><rect x="398.04" y="311" width="1.43" height="0.93" fill="#d00c80"/><rect x="401.06" y="306.6" width="0.95" height="0.88" fill="#c00a78"/><rect x="533.12" y="311" width="1.21" height="1.47" fill="#d00c80"/><rect x="525.48" y="306.6" width="1.35" height="1.04" fill="#c00a78"/><rect x="433.6" y="311" width="1.2" height="1.41" fill="#d00c80"/><rect x="483.57" y="306.6" width="1.07" height="1.13" fill="#c00a78"/><rect x="349.82" y="311" width="1.55" height="1.64" fill="#d00c80"/><rect x="598.08" y="306.6" width="1.37" height="0.86" fill="#c00a78"/><rect x="400.58" y="311" width="1.55" height="1.81" fill="#d00c80"/><rect x="137.43" y="306.6" width="0.87" height="1.04" fill="#c00a78"/><rect x="97.2" y="311" width="0.99" height="0.89" fill="#d00c80"/><rect x="469.08" y="306.6" width="1.27" height="1.5" fill="#c00a78"/><rect x="148.22" y="311" width="1.37" height="1.59" fill="#d00c80"/><rect x="141.08" y="306.6" width="1.33" height="1.57" fill="#c00a78"/><rect x="188.8" y="311" width="1.56" height="1.28" fill="#d00c80"/><rect x="355.56" y="306.6" width="1.39" height="1.43" fill="#c00a78"/><rect x="152.59" y="311" width="1.15" height="1.42" fill="#d00c80"/><rect x="263.27" y="306.6" width="0.92" height="0.92" fill="#c00a78"/><rect x="501.9" y="311" width="0.82" height="1.46" fill="#d00c80"/><rect x="326.41" y="306.6" width="0.81" height="0.93" fill="#c00a78"/><rect x="440.71" y="311" width="1.21" height="0.88" fill="#d00c80"/><rect x="665.71" y="306.6" width="1.27" height="1.57" fill="#c00a78"/><rect x="117.28" y="311" width="1.01" height="0.85" fill="#d00c80"/><rect x="537.32" y="306.6" width="0.96" height="0.73" fill="#c00a78"/><rect x="315.06" y="311" width="1.53" height="1.78" fill="#d00c80"/><rect x="213.11" y="306.6" width="0.89" height="1.52" fill="#c00a78"/><rect x="407.48" y="311" width="1.36" height="0.91" fill="#d00c80"/><rect x="87.84" y="306.6" width="1.21" height="1.03" fill="#c00a78"/><rect x="97.11" y="311" width="1.55" height="1.56" fill="#d00c80"/><rect x="551.41" y="306.6" width="0.85" height="1.46" fill="#c00a78"/><rect x="93.51" y="311" width="1.49" height="1.34" fill="#d00c80"/><rect x="263.29" y="306.6" width="1.13" height="1.53" fill="#c00a78"/><g><line x1="96" y1="178.4" x2="96" y2="190.9" stroke="#c8c030" stroke-width="0.8"/><line x1="99.22" y1="178.4" x2="99.22" y2="190.9" stroke="#c8c030" stroke-width="0.8"/><line x1="102.44" y1="178.4" x2="102.44" y2="190.9" stroke="#c8c030" stroke-width="0.8"/><line x1="105.66" y1="178.4" x2="105.66" y2="190.9" stroke="#c8c030" stroke-width="0.8"/><line x1="108.88" y1="178.4" x2="108.88" y2="190.9" stroke="#c8c030" stroke-width="0.8"/><line x1="112.1" y1="178.4" x2="112.1" y2="190.9" stroke="#c8c030" stroke-width="0.8"/><line x1="115.32" y1="178.4" x2="115.32" y2="190.9" stroke="#c8c030" stroke-width="0.8"/><line x1="118.54" y1="178.4" x2="118.54" y2="190.9" stroke="#c8c030" stroke-width="0.8"/><line x1="128.1" y1="178.4" x2="128.1" y2="190.9" stroke="#c8c030" stroke-width="0.8"/><line x1="131.32" y1="178.4" x2="131.32" y2="190.9" stroke="#c8c030" stroke-width="0.8"/><line x1="134.54" y1="178.4" x2="134.54" y2="190.9" stroke="#c8c030" stroke-width="0.8"/><line x1="137.76" y1="178.4" x2="137.76" y2="190.9" stroke="#c8c030" stroke-width="0.8"/><line x1="140.98" y1="178.4" x2="140.98" y2="190.9" stroke="#c8c030" stroke-width="0.8"/><line x1="144.2" y1="178.4" x2="144.2" y2="190.9" stroke="#c8c030" stroke-width="0.8"/><line x1="147.42" y1="178.4" x2="147.42" y2="190.9" stroke="#c8c030" stroke-width="0.8"/><line x1="150.64" y1="178.4" x2="150.64" y2="190.9" stroke="#c8c030" stroke-width="0.8"/><line x1="160.1" y1="178.4" x2="160.1" y2="190.9" stroke="#c8c030" stroke-width="0.8"/><line x1="161.3" y1="87.2" x2="161.3" y2="185.4" stroke="#b0b03c" stroke-width="1.2"/><line x1="163.92" y1="87.2" x2="163.92" y2="185.4" stroke="#b0b03c" stroke-width="1.2"/><rect x="160.8" y="85.1" width="3.62" height="4.2" fill="#f6f000"/><line x1="162.32" y1="81.2" x2="162.32" y2="88.2" stroke="#d8d030" stroke-width="0.8"/><line x1="163.72" y1="88.2" x2="163.72" y2="94.2" stroke="#b8b030" stroke-width="0.8"/><line x1="166.54" y1="178.4" x2="166.54" y2="190.9" stroke="#c8c030" stroke-width="0.8"/><line x1="169.76" y1="178.4" x2="169.76" y2="190.9" stroke="#c8c030" stroke-width="0.8"/><line x1="170.96" y1="87.2" x2="170.96" y2="185.4" stroke="#b0b03c" stroke-width="1.2"/><line x1="176.8" y1="87.2" x2="176.8" y2="185.4" stroke="#b0b03c" stroke-width="1.2"/><rect x="170.46" y="85.1" width="6.84" height="4.2" fill="#f6f000"/><line x1="171.98" y1="81.2" x2="171.98" y2="88.2" stroke="#d8d030" stroke-width="0.8"/><line x1="173.38" y1="88.2" x2="173.38" y2="94.2" stroke="#b8b030" stroke-width="0.8"/><line x1="175.2" y1="81.2" x2="175.2" y2="88.2" stroke="#d8d030" stroke-width="0.8"/><line x1="176.6" y1="88.2" x2="176.6" y2="94.2" stroke="#b8b030" stroke-width="0.8"/><line x1="179.42" y1="178.4" x2="179.42" y2="190.9" stroke="#c8c030" stroke-width="0.8"/><line x1="182.64" y1="178.4" x2="182.64" y2="190.9" stroke="#c8c030" stroke-width="0.8"/><line x1="192.2" y1="178.4" x2="192.2" y2="190.9" stroke="#c8c030" stroke-width="0.8"/><line x1="193.4" y1="87.2" x2="193.4" y2="185.4" stroke="#b0b03c" stroke-width="1.2"/><line x1="199.24" y1="87.2" x2="199.24" y2="185.4" stroke="#b0b03c" stroke-width="1.2"/><rect x="192.9" y="85.1" width="6.84" height="4.2" fill="#f6f000"/><line x1="194.42" y1="81.2" x2="194.42" y2="88.2" stroke="#d8d030" stroke-width="0.8"/><line x1="195.82" y1="88.2" x2="195.82" y2="94.2" stroke="#b8b030" stroke-width="0.8"/><line x1="197.64" y1="81.2" x2="197.64" y2="88.2" stroke="#d8d030" stroke-width="0.8"/><line x1="199.04" y1="88.2" x2="199.04" y2="94.2" stroke="#b8b030" stroke-width="0.8"/><line x1="201.86" y1="178.4" x2="201.86" y2="190.9" stroke="#c8c030" stroke-width="0.8"/><line x1="205.08" y1="178.4" x2="205.08" y2="190.9" stroke="#c8c030" stroke-width="0.8"/><line x1="206.28" y1="87.2" x2="206.28" y2="185.4" stroke="#b0b03c" stroke-width="1.2"/><line x1="208.9" y1="87.2" x2="208.9" y2="185.4" stroke="#b0b03c" stroke-width="1.2"/><rect x="205.78" y="85.1" width="3.62" height="4.2" fill="#f6f000"/><line x1="207.3" y1="81.2" x2="207.3" y2="88.2" stroke="#d8d030" stroke-width="0.8"/><line x1="208.7" y1="88.2" x2="208.7" y2="94.2" stroke="#b8b030" stroke-width="0.8"/><line x1="211.52" y1="178.4" x2="211.52" y2="190.9" stroke="#c8c030" stroke-width="0.8"/><line x1="212.72" y1="87.2" x2="212.72" y2="185.4" stroke="#b0b03c" stroke-width="1.2"/><line x1="215.34" y1="87.2" x2="215.34" y2="185.4" stroke="#b0b03c" stroke-width="1.2"/><rect x="212.22" y="85.1" width="3.62" height="4.2" fill="#f6f000"/><line x1="213.74" y1="81.2" x2="213.74" y2="88.2" stroke="#d8d030" stroke-width="0.8"/><line x1="215.14" y1="88.2" x2="215.14" y2="94.2" stroke="#b8b030" stroke-width="0.8"/><line x1="223.3" y1="178.4" x2="223.3" y2="190.9" stroke="#c8c030" stroke-width="0.8"/><line x1="224.5" y1="87.2" x2="224.5" y2="185.4" stroke="#b0b03c" stroke-width="1.2"/><line x1="227.12" y1="87.2" x2="227.12" y2="185.4" stroke="#b0b03c" stroke-width="1.2"/><rect x="224" y="85.1" width="3.62" height="4.2" fill="#f6f000"/><line x1="225.52" y1="81.2" x2="225.52" y2="88.2" stroke="#d8d030" stroke-width="0.8"/><line x1="226.92" y1="88.2" x2="226.92" y2="94.2" stroke="#b8b030" stroke-width="0.8"/><line x1="229.74" y1="178.4" x2="229.74" y2="190.9" stroke="#c8c030" stroke-width="0.8"/><line x1="232.96" y1="178.4" x2="232.96" y2="190.9" stroke="#c8c030" stroke-width="0.8"/><line x1="236.18" y1="178.4" x2="236.18" y2="190.9" stroke="#c8c030" stroke-width="0.8"/><line x1="239.4" y1="178.4" x2="239.4" y2="190.9" stroke="#c8c030" stroke-width="0.8"/><line x1="240.6" y1="87.2" x2="240.6" y2="185.4" stroke="#b0b03c" stroke-width="1.2"/><line x1="246.44" y1="87.2" x2="246.44" y2="185.4" stroke="#b0b03c" stroke-width="1.2"/><rect x="240.1" y="85.1" width="6.84" height="4.2" fill="#f6f000"/><line x1="241.62" y1="81.2" x2="241.62" y2="88.2" stroke="#d8d030" stroke-width="0.8"/><line x1="243.02" y1="88.2" x2="243.02" y2="94.2" stroke="#b8b030" stroke-width="0.8"/><line x1="244.84" y1="81.2" x2="244.84" y2="88.2" stroke="#d8d030" stroke-width="0.8"/><line x1="246.24" y1="88.2" x2="246.24" y2="94.2" stroke="#b8b030" stroke-width="0.8"/><line x1="256.2" y1="178.4" x2="256.2" y2="190.9" stroke="#c8c030" stroke-width="0.8"/><line x1="257.4" y1="87.2" x2="257.4" y2="185.4" stroke="#b0b03c" stroke-width="1.2"/><line x1="266.46" y1="87.2" x2="266.46" y2="185.4" stroke="#b0b03c" stroke-width="1.2"/><rect x="256.9" y="85.1" width="10.06" height="4.2" fill="#f6f000"/><line x1="258.42" y1="81.2" x2="258.42" y2="88.2" stroke="#d8d030" stroke-width="0.8"/><line x1="259.82" y1="88.2" x2="259.82" y2="94.2" stroke="#b8b030" stroke-width="0.8"/><line x1="261.64" y1="81.2" x2="261.64" y2="88.2" stroke="#d8d030" stroke-width="0.8"/><line x1="263.04" y1="88.2" x2="263.04" y2="94.2" stroke="#b8b030" stroke-width="0.8"/><line x1="264.86" y1="81.2" x2="264.86" y2="88.2" stroke="#d8d030" stroke-width="0.8"/><line x1="266.26" y1="88.2" x2="266.26" y2="94.2" stroke="#b8b030" stroke-width="0.8"/><line x1="269.08" y1="178.4" x2="269.08" y2="190.9" stroke="#c8c030" stroke-width="0.8"/><line x1="272.3" y1="178.4" x2="272.3" y2="190.9" stroke="#c8c030" stroke-width="0.8"/><line x1="273.5" y1="87.2" x2="273.5" y2="185.4" stroke="#b0b03c" stroke-width="1.2"/><line x1="276.12" y1="87.2" x2="276.12" y2="185.4" stroke="#b0b03c" stroke-width="1.2"/><rect x="273" y="85.1" width="3.62" height="4.2" fill="#f6f000"/><line x1="274.52" y1="81.2" x2="274.52" y2="88.2" stroke="#d8d030" stroke-width="0.8"/><line x1="275.92" y1="88.2" x2="275.92" y2="94.2" stroke="#b8b030" stroke-width="0.8"/><line x1="278.74" y1="178.4" x2="278.74" y2="190.9" stroke="#c8c030" stroke-width="0.8"/><line x1="288" y1="178.4" x2="288" y2="190.9" stroke="#c8c030" stroke-width="0.8"/><line x1="289.2" y1="87.2" x2="289.2" y2="185.4" stroke="#b0b03c" stroke-width="1.2"/><line x1="295.04" y1="87.2" x2="295.04" y2="185.4" stroke="#b0b03c" stroke-width="1.2"/><rect x="288.7" y="85.1" width="6.84" height="4.2" fill="#f6f000"/><line x1="290.22" y1="81.2" x2="290.22" y2="88.2" stroke="#d8d030" stroke-width="0.8"/><line x1="291.62" y1="88.2" x2="291.62" y2="94.2" stroke="#b8b030" stroke-width="0.8"/><line x1="293.44" y1="81.2" x2="293.44" y2="88.2" stroke="#d8d030" stroke-width="0.8"/><line x1="294.84" y1="88.2" x2="294.84" y2="94.2" stroke="#b8b030" stroke-width="0.8"/><line x1="297.66" y1="178.4" x2="297.66" y2="190.9" stroke="#c8c030" stroke-width="0.8"/><line x1="298.86" y1="87.2" x2="298.86" y2="185.4" stroke="#b0b03c" stroke-width="1.2"/><line x1="311.14" y1="87.2" x2="311.14" y2="185.4" stroke="#b0b03c" stroke-width="1.2"/><rect x="298.36" y="85.1" width="13.28" height="4.2" fill="#f6f000"/><line x1="299.88" y1="81.2" x2="299.88" y2="88.2" stroke="#d8d030" stroke-width="0.8"/><line x1="301.28" y1="88.2" x2="301.28" y2="94.2" stroke="#b8b030" stroke-width="0.8"/><line x1="303.1" y1="81.2" x2="303.1" y2="88.2" stroke="#d8d030" stroke-width="0.8"/><line x1="304.5" y1="88.2" x2="304.5" y2="94.2" stroke="#b8b030" stroke-width="0.8"/><line x1="306.32" y1="81.2" x2="306.32" y2="88.2" stroke="#d8d030" stroke-width="0.8"/><line x1="307.72" y1="88.2" x2="307.72" y2="94.2" stroke="#b8b030" stroke-width="0.8"/><line x1="309.54" y1="81.2" x2="309.54" y2="88.2" stroke="#d8d030" stroke-width="0.8"/><line x1="310.94" y1="88.2" x2="310.94" y2="94.2" stroke="#b8b030" stroke-width="0.8"/><line x1="319.4" y1="178.4" x2="319.4" y2="190.9" stroke="#c8c030" stroke-width="0.8"/><line x1="320.6" y1="87.2" x2="320.6" y2="185.4" stroke="#b0b03c" stroke-width="1.2"/><line x1="332.88" y1="87.2" x2="332.88" y2="185.4" stroke="#b0b03c" stroke-width="1.2"/><rect x="320.1" y="85.1" width="13.28" height="4.2" fill="#f6f000"/><line x1="321.62" y1="81.2" x2="321.62" y2="88.2" stroke="#d8d030" stroke-width="0.8"/><line x1="323.02" y1="88.2" x2="323.02" y2="94.2" stroke="#b8b030" stroke-width="0.8"/><line x1="324.84" y1="81.2" x2="324.84" y2="88.2" stroke="#d8d030" stroke-width="0.8"/><line x1="326.24" y1="88.2" x2="326.24" y2="94.2" stroke="#b8b030" stroke-width="0.8"/><line x1="328.06" y1="81.2" x2="328.06" y2="88.2" stroke="#d8d030" stroke-width="0.8"/><line x1="329.46" y1="88.2" x2="329.46" y2="94.2" stroke="#b8b030" stroke-width="0.8"/><line x1="331.28" y1="81.2" x2="331.28" y2="88.2" stroke="#d8d030" stroke-width="0.8"/><line x1="332.68" y1="88.2" x2="332.68" y2="94.2" stroke="#b8b030" stroke-width="0.8"/><line x1="335.5" y1="178.4" x2="335.5" y2="190.9" stroke="#c8c030" stroke-width="0.8"/><line x1="338.72" y1="178.4" x2="338.72" y2="190.9" stroke="#c8c030" stroke-width="0.8"/><line x1="339.92" y1="87.2" x2="339.92" y2="185.4" stroke="#b0b03c" stroke-width="1.2"/><line x1="342.54" y1="87.2" x2="342.54" y2="185.4" stroke="#b0b03c" stroke-width="1.2"/><rect x="339.42" y="85.1" width="3.62" height="4.2" fill="#f6f000"/><line x1="340.94" y1="81.2" x2="340.94" y2="88.2" stroke="#d8d030" stroke-width="0.8"/><line x1="342.34" y1="88.2" x2="342.34" y2="94.2" stroke="#b8b030" stroke-width="0.8"/><line x1="351.2" y1="178.4" x2="351.2" y2="190.9" stroke="#c8c030" stroke-width="0.8"/><line x1="354.42" y1="178.4" x2="354.42" y2="190.9" stroke="#c8c030" stroke-width="0.8"/><line x1="355.62" y1="87.2" x2="355.62" y2="185.4" stroke="#b0b03c" stroke-width="1.2"/><line x1="358.24" y1="87.2" x2="358.24" y2="185.4" stroke="#b0b03c" stroke-width="1.2"/><rect x="355.12" y="85.1" width="3.62" height="4.2" fill="#f6f000"/><line x1="356.64" y1="81.2" x2="356.64" y2="88.2" stroke="#d8d030" stroke-width="0.8"/><line x1="358.04" y1="88.2" x2="358.04" y2="94.2" stroke="#b8b030" stroke-width="0.8"/><line x1="360.86" y1="178.4" x2="360.86" y2="190.9" stroke="#c8c030" stroke-width="0.8"/><line x1="364.08" y1="178.4" x2="364.08" y2="190.9" stroke="#c8c030" stroke-width="0.8"/><line x1="367.3" y1="178.4" x2="367.3" y2="190.9" stroke="#c8c030" stroke-width="0.8"/><line x1="370.52" y1="178.4" x2="370.52" y2="190.9" stroke="#c8c030" stroke-width="0.8"/><line x1="373.74" y1="178.4" x2="373.74" y2="190.9" stroke="#c8c030" stroke-width="0.8"/><line x1="383.3" y1="178.4" x2="383.3" y2="190.9" stroke="#c8c030" stroke-width="0.8"/><line x1="384.5" y1="87.2" x2="384.5" y2="185.4" stroke="#b0b03c" stroke-width="1.2"/><line x1="387.12" y1="87.2" x2="387.12" y2="185.4" stroke="#b0b03c" stroke-width="1.2"/><rect x="384" y="85.1" width="3.62" height="4.2" fill="#f6f000"/><line x1="385.52" y1="81.2" x2="385.52" y2="88.2" stroke="#d8d030" stroke-width="0.8"/><line x1="386.92" y1="88.2" x2="386.92" y2="94.2" stroke="#b8b030" stroke-width="0.8"/><line x1="389.74" y1="178.4" x2="389.74" y2="190.9" stroke="#c8c030" stroke-width="0.8"/><line x1="390.94" y1="87.2" x2="390.94" y2="185.4" stroke="#b0b03c" stroke-width="1.2"/><line x1="393.56" y1="87.2" x2="393.56" y2="185.4" stroke="#b0b03c" stroke-width="1.2"/><rect x="390.44" y="85.1" width="3.62" height="4.2" fill="#f6f000"/><line x1="391.96" y1="81.2" x2="391.96" y2="88.2" stroke="#d8d030" stroke-width="0.8"/><line x1="393.36" y1="88.2" x2="393.36" y2="94.2" stroke="#b8b030" stroke-width="0.8"/><line x1="396.18" y1="178.4" x2="396.18" y2="190.9" stroke="#c8c030" stroke-width="0.8"/><line x1="399.4" y1="178.4" x2="399.4" y2="190.9" stroke="#c8c030" stroke-width="0.8"/><line x1="400.6" y1="87.2" x2="400.6" y2="185.4" stroke="#b0b03c" stroke-width="1.2"/><line x1="406.44" y1="87.2" x2="406.44" y2="185.4" stroke="#b0b03c" stroke-width="1.2"/><rect x="400.1" y="85.1" width="6.84" height="4.2" fill="#f6f000"/><line x1="401.62" y1="81.2" x2="401.62" y2="88.2" stroke="#d8d030" stroke-width="0.8"/><line x1="403.02" y1="88.2" x2="403.02" y2="94.2" stroke="#b8b030" stroke-width="0.8"/><line x1="404.84" y1="81.2" x2="404.84" y2="88.2" stroke="#d8d030" stroke-width="0.8"/><line x1="406.24" y1="88.2" x2="406.24" y2="94.2" stroke="#b8b030" stroke-width="0.8"/><line x1="415.1" y1="178.4" x2="415.1" y2="190.9" stroke="#c8c030" stroke-width="0.8"/><line x1="416.3" y1="87.2" x2="416.3" y2="185.4" stroke="#b0b03c" stroke-width="1.2"/><line x1="418.92" y1="87.2" x2="418.92" y2="185.4" stroke="#b0b03c" stroke-width="1.2"/><rect x="415.8" y="85.1" width="3.62" height="4.2" fill="#f6f000"/><line x1="417.32" y1="81.2" x2="417.32" y2="88.2" stroke="#d8d030" stroke-width="0.8"/><line x1="418.72" y1="88.2" x2="418.72" y2="94.2" stroke="#b8b030" stroke-width="0.8"/><line x1="421.54" y1="178.4" x2="421.54" y2="190.9" stroke="#c8c030" stroke-width="0.8"/><line x1="422.74" y1="87.2" x2="422.74" y2="185.4" stroke="#b0b03c" stroke-width="1.2"/><line x1="425.36" y1="87.2" x2="425.36" y2="185.4" stroke="#b0b03c" stroke-width="1.2"/><rect x="422.24" y="85.1" width="3.62" height="4.2" fill="#f6f000"/><line x1="423.76" y1="81.2" x2="423.76" y2="88.2" stroke="#d8d030" stroke-width="0.8"/><line x1="425.16" y1="88.2" x2="425.16" y2="94.2" stroke="#b8b030" stroke-width="0.8"/><line x1="427.98" y1="178.4" x2="427.98" y2="190.9" stroke="#c8c030" stroke-width="0.8"/><line x1="431.2" y1="178.4" x2="431.2" y2="190.9" stroke="#c8c030" stroke-width="0.8"/><line x1="434.42" y1="178.4" x2="434.42" y2="190.9" stroke="#c8c030" stroke-width="0.8"/><line x1="437.64" y1="178.4" x2="437.64" y2="190.9" stroke="#c8c030" stroke-width="0.8"/><line x1="447.2" y1="178.4" x2="447.2" y2="190.9" stroke="#c8c030" stroke-width="0.8"/><line x1="448.4" y1="87.2" x2="448.4" y2="185.4" stroke="#b0b03c" stroke-width="1.2"/><line x1="451.02" y1="87.2" x2="451.02" y2="185.4" stroke="#b0b03c" stroke-width="1.2"/><rect x="447.9" y="85.1" width="3.62" height="4.2" fill="#f6f000"/><line x1="449.42" y1="81.2" x2="449.42" y2="88.2" stroke="#d8d030" stroke-width="0.8"/><line x1="450.82" y1="88.2" x2="450.82" y2="94.2" stroke="#b8b030" stroke-width="0.8"/><line x1="453.64" y1="178.4" x2="453.64" y2="190.9" stroke="#c8c030" stroke-width="0.8"/><line x1="456.86" y1="178.4" x2="456.86" y2="190.9" stroke="#c8c030" stroke-width="0.8"/><line x1="458.06" y1="87.2" x2="458.06" y2="185.4" stroke="#b0b03c" stroke-width="1.2"/><line x1="460.68" y1="87.2" x2="460.68" y2="185.4" stroke="#b0b03c" stroke-width="1.2"/><rect x="457.56" y="85.1" width="3.62" height="4.2" fill="#f6f000"/><line x1="459.08" y1="81.2" x2="459.08" y2="88.2" stroke="#d8d030" stroke-width="0.8"/><line x1="460.48" y1="88.2" x2="460.48" y2="94.2" stroke="#b8b030" stroke-width="0.8"/><line x1="463.3" y1="178.4" x2="463.3" y2="190.9" stroke="#c8c030" stroke-width="0.8"/><line x1="466.52" y1="178.4" x2="466.52" y2="190.9" stroke="#c8c030" stroke-width="0.8"/><line x1="467.72" y1="87.2" x2="467.72" y2="185.4" stroke="#b0b03c" stroke-width="1.2"/><line x1="470.34" y1="87.2" x2="470.34" y2="185.4" stroke="#b0b03c" stroke-width="1.2"/><rect x="467.22" y="85.1" width="3.62" height="4.2" fill="#f6f000"/><line x1="468.74" y1="81.2" x2="468.74" y2="88.2" stroke="#d8d030" stroke-width="0.8"/><line x1="470.14" y1="88.2" x2="470.14" y2="94.2" stroke="#b8b030" stroke-width="0.8"/><line x1="478.7" y1="178.4" x2="478.7" y2="190.9" stroke="#c8c030" stroke-width="0.8"/><line x1="481.92" y1="178.4" x2="481.92" y2="190.9" stroke="#c8c030" stroke-width="0.8"/><line x1="485.14" y1="178.4" x2="485.14" y2="190.9" stroke="#c8c030" stroke-width="0.8"/><line x1="488.36" y1="178.4" x2="488.36" y2="190.9" stroke="#c8c030" stroke-width="0.8"/><line x1="491.58" y1="178.4" x2="491.58" y2="190.9" stroke="#c8c030" stroke-width="0.8"/><line x1="494.8" y1="178.4" x2="494.8" y2="190.9" stroke="#c8c030" stroke-width="0.8"/><line x1="498.02" y1="178.4" x2="498.02" y2="190.9" stroke="#c8c030" stroke-width="0.8"/><line x1="501.24" y1="178.4" x2="501.24" y2="190.9" stroke="#c8c030" stroke-width="0.8"/><line x1="510.1" y1="178.4" x2="510.1" y2="190.9" stroke="#c8c030" stroke-width="0.8"/><line x1="513.32" y1="178.4" x2="513.32" y2="190.9" stroke="#c8c030" stroke-width="0.8"/><line x1="516.54" y1="178.4" x2="516.54" y2="190.9" stroke="#c8c030" stroke-width="0.8"/><line x1="519.76" y1="178.4" x2="519.76" y2="190.9" stroke="#c8c030" stroke-width="0.8"/><line x1="522.98" y1="178.4" x2="522.98" y2="190.9" stroke="#c8c030" stroke-width="0.8"/><line x1="526.2" y1="178.4" x2="526.2" y2="190.9" stroke="#c8c030" stroke-width="0.8"/><line x1="529.42" y1="178.4" x2="529.42" y2="190.9" stroke="#c8c030" stroke-width="0.8"/><line x1="532.64" y1="178.4" x2="532.64" y2="190.9" stroke="#c8c030" stroke-width="0.8"/><line x1="541.9" y1="178.4" x2="541.9" y2="190.9" stroke="#c8c030" stroke-width="0.8"/><line x1="545.12" y1="178.4" x2="545.12" y2="190.9" stroke="#c8c030" stroke-width="0.8"/><line x1="546.32" y1="87.2" x2="546.32" y2="185.4" stroke="#b0b03c" stroke-width="1.2"/><line x1="552.16" y1="87.2" x2="552.16" y2="185.4" stroke="#b0b03c" stroke-width="1.2"/><rect x="545.82" y="85.1" width="6.84" height="4.2" fill="#f6f000"/><line x1="547.34" y1="81.2" x2="547.34" y2="88.2" stroke="#d8d030" stroke-width="0.8"/><line x1="548.74" y1="88.2" x2="548.74" y2="94.2" stroke="#b8b030" stroke-width="0.8"/><line x1="550.56" y1="81.2" x2="550.56" y2="88.2" stroke="#d8d030" stroke-width="0.8"/><line x1="551.96" y1="88.2" x2="551.96" y2="94.2" stroke="#b8b030" stroke-width="0.8"/><line x1="554.78" y1="178.4" x2="554.78" y2="190.9" stroke="#c8c030" stroke-width="0.8"/><line x1="558" y1="178.4" x2="558" y2="190.9" stroke="#c8c030" stroke-width="0.8"/><line x1="561.22" y1="178.4" x2="561.22" y2="190.9" stroke="#c8c030" stroke-width="0.8"/><line x1="562.42" y1="87.2" x2="562.42" y2="185.4" stroke="#b0b03c" stroke-width="1.2"/><line x1="565.04" y1="87.2" x2="565.04" y2="185.4" stroke="#b0b03c" stroke-width="1.2"/><rect x="561.92" y="85.1" width="3.62" height="4.2" fill="#f6f000"/><line x1="563.44" y1="81.2" x2="563.44" y2="88.2" stroke="#d8d030" stroke-width="0.8"/><line x1="564.84" y1="88.2" x2="564.84" y2="94.2" stroke="#b8b030" stroke-width="0.8"/><line x1="574.1" y1="178.4" x2="574.1" y2="190.9" stroke="#c8c030" stroke-width="0.8"/><line x1="577.32" y1="178.4" x2="577.32" y2="190.9" stroke="#c8c030" stroke-width="0.8"/><line x1="578.52" y1="87.2" x2="578.52" y2="185.4" stroke="#b0b03c" stroke-width="1.2"/><line x1="587.58" y1="87.2" x2="587.58" y2="185.4" stroke="#b0b03c" stroke-width="1.2"/><rect x="578.02" y="85.1" width="10.06" height="4.2" fill="#f6f000"/><line x1="579.54" y1="81.2" x2="579.54" y2="88.2" stroke="#d8d030" stroke-width="0.8"/><line x1="580.94" y1="88.2" x2="580.94" y2="94.2" stroke="#b8b030" stroke-width="0.8"/><line x1="582.76" y1="81.2" x2="582.76" y2="88.2" stroke="#d8d030" stroke-width="0.8"/><line x1="584.16" y1="88.2" x2="584.16" y2="94.2" stroke="#b8b030" stroke-width="0.8"/><line x1="585.98" y1="81.2" x2="585.98" y2="88.2" stroke="#d8d030" stroke-width="0.8"/><line x1="587.38" y1="88.2" x2="587.38" y2="94.2" stroke="#b8b030" stroke-width="0.8"/><line x1="590.2" y1="178.4" x2="590.2" y2="190.9" stroke="#c8c030" stroke-width="0.8"/><line x1="593.42" y1="178.4" x2="593.42" y2="190.9" stroke="#c8c030" stroke-width="0.8"/><line x1="594.62" y1="87.2" x2="594.62" y2="185.4" stroke="#b0b03c" stroke-width="1.2"/><line x1="597.24" y1="87.2" x2="597.24" y2="185.4" stroke="#b0b03c" stroke-width="1.2"/><rect x="594.12" y="85.1" width="3.62" height="4.2" fill="#f6f000"/><line x1="595.64" y1="81.2" x2="595.64" y2="88.2" stroke="#d8d030" stroke-width="0.8"/><line x1="597.04" y1="88.2" x2="597.04" y2="94.2" stroke="#b8b030" stroke-width="0.8"/><line x1="605.8" y1="178.4" x2="605.8" y2="190.9" stroke="#c8c030" stroke-width="0.8"/><line x1="609.02" y1="178.4" x2="609.02" y2="190.9" stroke="#c8c030" stroke-width="0.8"/><line x1="610.22" y1="87.2" x2="610.22" y2="185.4" stroke="#b0b03c" stroke-width="1.2"/><line x1="616.06" y1="87.2" x2="616.06" y2="185.4" stroke="#b0b03c" stroke-width="1.2"/><rect x="609.72" y="85.1" width="6.84" height="4.2" fill="#f6f000"/><line x1="611.24" y1="81.2" x2="611.24" y2="88.2" stroke="#d8d030" stroke-width="0.8"/><line x1="612.64" y1="88.2" x2="612.64" y2="94.2" stroke="#b8b030" stroke-width="0.8"/><line x1="614.46" y1="81.2" x2="614.46" y2="88.2" stroke="#d8d030" stroke-width="0.8"/><line x1="615.86" y1="88.2" x2="615.86" y2="94.2" stroke="#b8b030" stroke-width="0.8"/><line x1="618.68" y1="178.4" x2="618.68" y2="190.9" stroke="#c8c030" stroke-width="0.8"/><line x1="621.9" y1="178.4" x2="621.9" y2="190.9" stroke="#c8c030" stroke-width="0.8"/><line x1="623.1" y1="87.2" x2="623.1" y2="185.4" stroke="#b0b03c" stroke-width="1.2"/><line x1="625.72" y1="87.2" x2="625.72" y2="185.4" stroke="#b0b03c" stroke-width="1.2"/><rect x="622.6" y="85.1" width="3.62" height="4.2" fill="#f6f000"/><line x1="624.12" y1="81.2" x2="624.12" y2="88.2" stroke="#d8d030" stroke-width="0.8"/><line x1="625.52" y1="88.2" x2="625.52" y2="94.2" stroke="#b8b030" stroke-width="0.8"/><line x1="628.34" y1="178.4" x2="628.34" y2="190.9" stroke="#c8c030" stroke-width="0.8"/><rect x="29.5" y="181.4" width="131.5" height="4.1" fill="#f6f200"/><rect x="164.22" y="181.4" width="6.44" height="4.1" fill="#f6f200"/><rect x="177.1" y="181.4" width="16" height="4.1" fill="#f6f200"/><rect x="199.54" y="181.4" width="6.44" height="4.1" fill="#f6f200"/><rect x="209.2" y="181.4" width="3.22" height="4.1" fill="#f6f200"/><rect x="215.64" y="181.4" width="8.56" height="4.1" fill="#f6f200"/><rect x="227.42" y="181.4" width="12.88" height="4.1" fill="#f6f200"/><rect x="246.74" y="181.4" width="10.36" height="4.1" fill="#f6f200"/><rect x="266.76" y="181.4" width="6.44" height="4.1" fill="#f6f200"/><rect x="276.42" y="181.4" width="12.48" height="4.1" fill="#f6f200"/><rect x="295.34" y="181.4" width="3.22" height="4.1" fill="#f6f200"/><rect x="311.44" y="181.4" width="8.86" height="4.1" fill="#f6f200"/><rect x="333.18" y="181.4" width="6.44" height="4.1" fill="#f6f200"/><rect x="342.84" y="181.4" width="12.48" height="4.1" fill="#f6f200"/><rect x="358.54" y="181.4" width="25.66" height="4.1" fill="#f6f200"/><rect x="387.42" y="181.4" width="3.22" height="4.1" fill="#f6f200"/><rect x="393.86" y="181.4" width="6.44" height="4.1" fill="#f6f200"/><rect x="406.74" y="181.4" width="9.26" height="4.1" fill="#f6f200"/><rect x="419.22" y="181.4" width="3.22" height="4.1" fill="#f6f200"/><rect x="425.66" y="181.4" width="22.44" height="4.1" fill="#f6f200"/><rect x="451.32" y="181.4" width="6.44" height="4.1" fill="#f6f200"/><rect x="460.98" y="181.4" width="6.44" height="4.1" fill="#f6f200"/><rect x="470.64" y="181.4" width="75.38" height="4.1" fill="#f6f200"/><rect x="552.46" y="181.4" width="9.66" height="4.1" fill="#f6f200"/><rect x="565.34" y="181.4" width="12.88" height="4.1" fill="#f6f200"/><rect x="587.88" y="181.4" width="6.44" height="4.1" fill="#f6f200"/><rect x="597.54" y="181.4" width="12.38" height="4.1" fill="#f6f200"/><rect x="616.36" y="181.4" width="6.44" height="4.1" fill="#f6f200"/><rect x="626.02" y="181.4" width="49.48" height="4.1" fill="#f6f200"/></g><text x="101.25" y="82.2" font-size="6.4" fill="#e0eaea" stroke="#e0eaea" stroke-width="0.15" textLength="12.4" lengthAdjust="spacingAndGlyphs">0x00</text><text x="133.05" y="82.2" font-size="6.4" fill="#e0eaea" stroke="#e0eaea" stroke-width="0.15" textLength="12.4" lengthAdjust="spacingAndGlyphs">0x00</text><text x="164.95" y="82.2" font-size="6.4" fill="#e0eaea" stroke="#e0eaea" stroke-width="0.15" textLength="12.4" lengthAdjust="spacingAndGlyphs">0x4c</text><text x="197.35" y="82.2" font-size="6.4" fill="#e0eaea" stroke="#e0eaea" stroke-width="0.15" textLength="12.4" lengthAdjust="spacingAndGlyphs">0x65</text><text x="228.8" y="82.2" font-size="6.4" fill="#e0eaea" stroke="#e0eaea" stroke-width="0.15" textLength="12.4" lengthAdjust="spacingAndGlyphs">0x43</text><text x="260.75" y="82.2" font-size="6.4" fill="#e0eaea" stroke="#e0eaea" stroke-width="0.15" textLength="12.4" lengthAdjust="spacingAndGlyphs">0x72</text><text x="293.1" y="82.2" font-size="6.4" fill="#e0eaea" stroke="#e0eaea" stroke-width="0.15" textLength="12.4" lengthAdjust="spacingAndGlyphs">0x6f</text><text x="324.85" y="82.2" font-size="6.4" fill="#e0eaea" stroke="#e0eaea" stroke-width="0.15" textLength="12.4" lengthAdjust="spacingAndGlyphs">0x79</text><text x="355.95" y="82.2" font-size="6.4" fill="#e0eaea" stroke="#e0eaea" stroke-width="0.15" textLength="12.4" lengthAdjust="spacingAndGlyphs">0x20</text><text x="388.25" y="82.2" font-size="6.4" fill="#e0eaea" stroke="#e0eaea" stroke-width="0.15" textLength="12.4" lengthAdjust="spacingAndGlyphs">0x53</text><text x="420.2" y="82.2" font-size="6.4" fill="#e0eaea" stroke="#e0eaea" stroke-width="0.15" textLength="12.4" lengthAdjust="spacingAndGlyphs">0x50</text><text x="452.3" y="82.2" font-size="6.4" fill="#e0eaea" stroke="#e0eaea" stroke-width="0.15" textLength="12.4" lengthAdjust="spacingAndGlyphs">0x49</text><text x="483.6" y="82.2" font-size="6.4" fill="#e0eaea" stroke="#e0eaea" stroke-width="0.15" textLength="12.4" lengthAdjust="spacingAndGlyphs">0x00</text><text x="515.2" y="82.2" font-size="6.4" fill="#e0eaea" stroke="#e0eaea" stroke-width="0.15" textLength="12.4" lengthAdjust="spacingAndGlyphs">0x00</text><text x="547.15" y="82.2" font-size="6.4" fill="#e0eaea" stroke="#e0eaea" stroke-width="0.15" textLength="12.4" lengthAdjust="spacingAndGlyphs">0x31</text><text x="578.7" y="82.2" font-size="6.4" fill="#e0eaea" stroke="#e0eaea" stroke-width="0.15" textLength="12.4" lengthAdjust="spacingAndGlyphs">0x39</text><text x="610.6" y="82.2" font-size="6.4" fill="#e0eaea" stroke="#e0eaea" stroke-width="0.15" textLength="12.4" lengthAdjust="spacingAndGlyphs">0x32</text><text x="31.6" y="53.3" font-size="6.6" fill="#e8e02a" stroke="#e8e02a" stroke-width="0.18" textLength="17" lengthAdjust="spacingAndGlyphs">7.35 V</text><rect x="30" y="80.3" width="20.1" height="8" fill="#000"/><text x="31.6" y="86.6" font-size="6.6" fill="#e8e02a" stroke="#e8e02a" stroke-width="0.18" textLength="17" lengthAdjust="spacingAndGlyphs">5.35 V</text><rect x="30" y="117.5" width="20.1" height="8" fill="#000"/><text x="31.6" y="123.8" font-size="6.6" fill="#e8e02a" stroke="#e8e02a" stroke-width="0.18" textLength="17" lengthAdjust="spacingAndGlyphs">3.35 V</text><rect x="30" y="155.3" width="20.2" height="8" fill="#000"/><text x="32" y="161.6" font-size="6.6" fill="#e8e02a" stroke="#e8e02a" stroke-width="0.18" textLength="16.7" lengthAdjust="spacingAndGlyphs">1.35 V</text><rect x="30" y="192.5" width="24.1" height="8" fill="#000"/><text x="32" y="198.8" font-size="6.6" fill="#e8e02a" stroke="#e8e02a" stroke-width="0.18" textLength="20.6" lengthAdjust="spacingAndGlyphs">-650 mV</text><rect x="30" y="230.3" width="22.3" height="8" fill="#000"/><text x="31.5" y="236.6" font-size="6.6" fill="#e8e02a" stroke="#e8e02a" stroke-width="0.18" textLength="19.3" lengthAdjust="spacingAndGlyphs">-2.65 V</text><rect x="30" y="267.8" width="22.3" height="8" fill="#161b3e"/><text x="31.5" y="274.1" font-size="6.6" fill="#e8e02a" stroke="#e8e02a" stroke-width="0.18" textLength="19.3" lengthAdjust="spacingAndGlyphs">-4.65 V</text><rect x="30" y="304.8" width="22.3" height="8" fill="#000"/><text x="31.5" y="311.1" font-size="6.6" fill="#e8e02a" stroke="#e8e02a" stroke-width="0.18" textLength="19.3" lengthAdjust="spacingAndGlyphs">-6.65 V</text><rect x="84.8" y="337.5" width="18.4" height="8.5" fill="#000"/><text x="85.8" y="344.5" font-size="6.6" fill="#e8e02a" stroke="#e8e02a" stroke-width="0.18" textLength="16.4" lengthAdjust="spacingAndGlyphs">-76 µs</text><rect x="149.7" y="337.5" width="19.2" height="8.5" fill="#000"/><text x="150.7" y="344.5" font-size="6.6" fill="#e8e02a" stroke="#e8e02a" stroke-width="0.18" textLength="17.2" lengthAdjust="spacingAndGlyphs">124 µs</text><rect x="214" y="337.5" width="19.1" height="8.5" fill="#000"/><text x="215" y="344.5" font-size="6.6" fill="#e8e02a" stroke="#e8e02a" stroke-width="0.18" textLength="17.1" lengthAdjust="spacingAndGlyphs">324 µs</text><rect x="278.6" y="337.5" width="19" height="8.5" fill="#000"/><text x="279.6" y="344.5" font-size="6.6" fill="#e8e02a" stroke="#e8e02a" stroke-width="0.18" textLength="17" lengthAdjust="spacingAndGlyphs">524 µs</text><rect x="343.2" y="337.5" width="19" height="8.5" fill="#000"/><text x="344.2" y="344.5" font-size="6.6" fill="#e8e02a" stroke="#e8e02a" stroke-width="0.18" textLength="17" lengthAdjust="spacingAndGlyphs">724 µs</text><rect x="407.8" y="337.5" width="19" height="8.5" fill="#000"/><text x="408.8" y="344.5" font-size="6.6" fill="#e8e02a" stroke="#e8e02a" stroke-width="0.18" textLength="17" lengthAdjust="spacingAndGlyphs">924 µs</text><rect x="469.6" y="337.5" width="24.8" height="8.5" fill="#000"/><text x="470.6" y="344.5" font-size="6.6" fill="#e8e02a" stroke="#e8e02a" stroke-width="0.18" textLength="22.8" lengthAdjust="spacingAndGlyphs">1.124 ms</text><rect x="534.4" y="337.5" width="24.6" height="8.5" fill="#000"/><text x="535.4" y="344.5" font-size="6.6" fill="#e8e02a" stroke="#e8e02a" stroke-width="0.18" textLength="22.6" lengthAdjust="spacingAndGlyphs">1.324 ms</text><rect x="598.7" y="337.5" width="25.2" height="8.5" fill="#000"/><text x="599.7" y="344.5" font-size="6.6" fill="#e8e02a" stroke="#e8e02a" stroke-width="0.18" textLength="23.2" lengthAdjust="spacingAndGlyphs">1.524 ms</text><rect x="649.6" y="337.5" width="24.8" height="8.5" fill="#000"/><text x="650.6" y="344.5" font-size="6.6" fill="#e8e02a" stroke="#e8e02a" stroke-width="0.18" textLength="22.8" lengthAdjust="spacingAndGlyphs">1.724 ms</text><path d="M676.5 121.5 L681.5 118.6 L681.5 124.4Z" fill="#f0f000"/><path d="M676.5 245.3 L681.5 242.6 L681.5 248Z" fill="#ff18a0"/><path d="M119 346.8 L116.6 351.2 L121.4 351.2Z" fill="#f0f000"/><rect x="21.8" y="177.8" width="7.4" height="5" fill="none" stroke="#f0f000" stroke-width="0.9"/><text x="22.4" y="182.4" font-size="5.4" fill="#f0f000" stroke="#f0f000" stroke-width="0.05" font-weight="bold" textLength="6.2" lengthAdjust="spacingAndGlyphs">C1</text><line x1="24.3" y1="184" x2="29" y2="184" stroke="#f0f000" stroke-width="0.9"/><text x="0" y="0" font-size="5.4" fill="#ff18a0" stroke="#ff18a0" stroke-width="0.15" textLength="5.8" lengthAdjust="spacingAndGlyphs" font-family="Liberation Sans" transform="translate(27.6,307.6) rotate(-90)">C2</text><line x1="23.8" y1="308.6" x2="30" y2="308.6" stroke="#ff18a0" stroke-width="1"/><rect x="29.2" y="308.3" width="1.8" height="2.8" fill="#ff18a0"/><rect x="20.5" y="353.5" width="264" height="50" fill="#000"/><line x1="20.5" y1="353.5" x2="284.5" y2="353.5" stroke="#4a4a4a" stroke-width="1"/><rect x="21" y="354" width="41" height="8" fill="#f4f000"/><line x1="21" y1="362.2" x2="284.5" y2="362.2" stroke="#262626" stroke-width="0.9"/><line x1="21" y1="370.4" x2="284.5" y2="370.4" stroke="#262626" stroke-width="0.9"/><line x1="21" y1="378.5" x2="284.5" y2="378.5" stroke="#262626" stroke-width="0.9"/><line x1="21" y1="386.7" x2="284.5" y2="386.7" stroke="#262626" stroke-width="0.9"/><line x1="21" y1="394.9" x2="284.5" y2="394.9" stroke="#262626" stroke-width="0.9"/><line x1="21" y1="403" x2="284.5" y2="403" stroke="#262626" stroke-width="0.9"/><line x1="20.5" y1="354" x2="20.5" y2="403" stroke="#262626" stroke-width="0.9"/><line x1="62.4" y1="354" x2="62.4" y2="403" stroke="#202020" stroke-width="0.9"/><line x1="103.3" y1="354" x2="103.3" y2="403" stroke="#202020" stroke-width="0.9"/><line x1="232.3" y1="354" x2="232.3" y2="362.2" stroke="#202020" stroke-width="0.9"/><text x="21.7" y="360.1" font-size="6.8" fill="#2a2000" stroke="#2a2000" stroke-width="0.4" textLength="12.9" lengthAdjust="spacingAndGlyphs">SSPI</text><text x="63.7" y="360.1" font-size="6.8" fill="#e4e2dc" stroke="#e4e2dc" stroke-width="0.1" textLength="13.3" lengthAdjust="spacingAndGlyphs">Time</text><text x="104.4" y="360.1" font-size="6.8" fill="#e4e2dc" stroke="#e4e2dc" stroke-width="0.1" textLength="14" lengthAdjust="spacingAndGlyphs">Data</text><text x="233.5" y="360.1" font-size="6.8" fill="#e4e2dc" stroke="#e4e2dc" stroke-width="0.1" textLength="37.9" lengthAdjust="spacingAndGlyphs">Bit Rate/Byte</text><path d="M99.2 357.9 L102.6 357.9 L100.9 360.3 Z" fill="#c8c8c8"/><path d="M229.2 357.9 L232.6 357.9 L230.9 360.3 Z" fill="#c8c8c8"/><path d="M280.7 357.9 L284.1 357.9 L282.4 360.3 Z" fill="#c8c8c8"/><text x="21.8" y="369.2" font-size="7.4" fill="#e4e2dc" stroke="#e4e2dc" stroke-width="0.12" textLength="2.6" lengthAdjust="spacingAndGlyphs">1</text><text x="62.9" y="369.2" font-size="7.4" fill="#e4e2dc" stroke="#e4e2dc" stroke-width="0.12" textLength="31.3" lengthAdjust="spacingAndGlyphs">-70.080 µs</text><text x="104.5" y="369.2" font-size="7.4" fill="#e4e2dc" stroke="#e4e2dc" stroke-width="0.12" textLength="13.8" lengthAdjust="spacingAndGlyphs">0x00</text><text x="233.5" y="369.2" font-size="7.4" fill="#e4e2dc" stroke="#e4e2dc" stroke-width="0.12" textLength="41.8" lengthAdjust="spacingAndGlyphs">100.015 kbit/s</text><text x="21.8" y="377.37" font-size="7.4" fill="#e4e2dc" stroke="#e4e2dc" stroke-width="0.12" textLength="2.6" lengthAdjust="spacingAndGlyphs">2</text><text x="62.9" y="377.37" font-size="7.4" fill="#e4e2dc" stroke="#e4e2dc" stroke-width="0.12" textLength="28.9" lengthAdjust="spacingAndGlyphs">27.822 µs</text><text x="104.5" y="377.37" font-size="7.4" fill="#e4e2dc" stroke="#e4e2dc" stroke-width="0.12" textLength="13.8" lengthAdjust="spacingAndGlyphs">0x00</text><text x="233.5" y="377.37" font-size="7.4" fill="#e4e2dc" stroke="#e4e2dc" stroke-width="0.12" textLength="41.8" lengthAdjust="spacingAndGlyphs">100.015 kbit/s</text><text x="21.8" y="385.54" font-size="7.4" fill="#e4e2dc" stroke="#e4e2dc" stroke-width="0.12" textLength="2.6" lengthAdjust="spacingAndGlyphs">3</text><text x="62.9" y="385.54" font-size="7.4" fill="#e4e2dc" stroke="#e4e2dc" stroke-width="0.12" textLength="32.3" lengthAdjust="spacingAndGlyphs">126.557 µs</text><text x="104.5" y="385.54" font-size="7.4" fill="#e4e2dc" stroke="#e4e2dc" stroke-width="0.12" textLength="13.8" lengthAdjust="spacingAndGlyphs">0x4c</text><text x="233.5" y="385.54" font-size="7.4" fill="#e4e2dc" stroke="#e4e2dc" stroke-width="0.12" textLength="41.8" lengthAdjust="spacingAndGlyphs">100.015 kbit/s</text><text x="21.8" y="393.71" font-size="7.4" fill="#e4e2dc" stroke="#e4e2dc" stroke-width="0.12" textLength="2.6" lengthAdjust="spacingAndGlyphs">4</text><text x="62.9" y="393.71" font-size="7.4" fill="#e4e2dc" stroke="#e4e2dc" stroke-width="0.12" textLength="32.3" lengthAdjust="spacingAndGlyphs">225.208 µs</text><text x="104.5" y="393.71" font-size="7.4" fill="#e4e2dc" stroke="#e4e2dc" stroke-width="0.12" textLength="13.8" lengthAdjust="spacingAndGlyphs">0x65</text><text x="233.5" y="393.71" font-size="7.4" fill="#e4e2dc" stroke="#e4e2dc" stroke-width="0.12" textLength="41.8" lengthAdjust="spacingAndGlyphs">100.015 kbit/s</text><text x="21.8" y="401.88" font-size="7.4" fill="#e4e2dc" stroke="#e4e2dc" stroke-width="0.12" textLength="2.6" lengthAdjust="spacingAndGlyphs">5</text><text x="62.9" y="401.88" font-size="7.4" fill="#e4e2dc" stroke="#e4e2dc" stroke-width="0.12" textLength="32.3" lengthAdjust="spacingAndGlyphs">323.943 µs</text><text x="104.5" y="401.88" font-size="7.4" fill="#e4e2dc" stroke="#e4e2dc" stroke-width="0.12" textLength="13.8" lengthAdjust="spacingAndGlyphs">0x43</text><text x="233.5" y="401.88" font-size="7.4" fill="#e4e2dc" stroke="#e4e2dc" stroke-width="0.12" textLength="41.8" lengthAdjust="spacingAndGlyphs">100.015 kbit/s</text><rect x="285" y="353.8" width="16.3" height="50.5" fill="#262626" stroke="#74787a" stroke-width="1"/><rect x="285.4" y="354.2" width="15.5" height="15" fill="#585d5f"/><path d="M287.3 365.5 L293.4 358.4 L299.5 365.5Z" fill="#f4f4f4"/><rect x="285.4" y="369.3" width="15.5" height="8.6" fill="#505557"/><line x1="285.4" y1="369.6" x2="300.9" y2="369.6" stroke="#6c7072" stroke-width="0.7"/><rect x="285.4" y="388" width="15.5" height="16" fill="#585d5f"/><path d="M287.3 392.8 L299.5 392.8 L293.4 399.7Z" fill="#f4f4f4"/><rect x="20.6" y="404.8" width="50.8" height="25.6" fill="#2e5784"/><rect x="21" y="405" width="50" height="8.6" fill="#f4f000"/><path d="M21 413.6 L21 430 L71 430 L71 413.6" fill="none" stroke="#2a86ea" stroke-width="1.2"/><text x="23" y="411.6" font-size="6.8" fill="#1a1400" stroke="#1a1400" stroke-width="0.35" textLength="7.2" lengthAdjust="spacingAndGlyphs">C1</text><rect x="53.4" y="406.3" width="16.4" height="6.6" fill="#0a0a00" rx="1.2"/><text x="54.6" y="411.5" font-size="5.6" fill="#f0e800" stroke="#f0e800" stroke-width="0.15" textLength="14" lengthAdjust="spacingAndGlyphs">DC1M</text><text x="43" y="420.4" font-size="6.8" fill="#e4e8ec" stroke="#e4e8ec" stroke-width="0.1" textLength="26.8" lengthAdjust="spacingAndGlyphs">2.00 V/div</text><text x="37" y="428" font-size="6.8" fill="#e4e8ec" stroke="#e4e8ec" stroke-width="0.1" textLength="32.8" lengthAdjust="spacingAndGlyphs">650 mV ofst</text><rect x="72.8" y="404.8" width="50.4" height="25.6" fill="#474747"/><rect x="73" y="405" width="50" height="8.6" fill="#f0169c"/><text x="74.4" y="411.6" font-size="6.8" fill="#500038" stroke="#500038" stroke-width="0.35" textLength="8.4" lengthAdjust="spacingAndGlyphs">C2</text><rect x="105.2" y="406.3" width="16" height="6.6" fill="#1a0010" rx="1.2"/><text x="106.2" y="411.5" font-size="5.6" fill="#f0149e" stroke="#f0149e" stroke-width="0.15" textLength="14" lengthAdjust="spacingAndGlyphs">DC1M</text><text x="94.8" y="420.4" font-size="6.8" fill="#e4e8ec" stroke="#e4e8ec" stroke-width="0.1" textLength="27.6" lengthAdjust="spacingAndGlyphs">2.00 V/div</text><text x="85.2" y="428" font-size="6.8" fill="#e4e8ec" stroke="#e4e8ec" stroke-width="0.1" textLength="37.2" lengthAdjust="spacingAndGlyphs">-5.95 V offset</text><rect x="124.5" y="405.3" width="50" height="25" fill="none" stroke="#c8c8c8" stroke-width="0.8" rx="1.5" stroke-dasharray="0.9 1.1"/><line x1="144.9" y1="417.6" x2="152.7" y2="417.6" stroke="#f0f0f0" stroke-width="1.2"/><line x1="148.8" y1="413.7" x2="148.8" y2="421.4" stroke="#f0f0f0" stroke-width="1.2"/><rect x="538" y="405" width="29.3" height="8" fill="#0aec0a"/><text x="549.1" y="411.9" font-size="6.9" fill="#042000" stroke="#042000" stroke-width="0.15" font-weight="bold" textLength="7.7" lengthAdjust="spacingAndGlyphs">HD</text><rect x="538" y="413" width="29.3" height="16.8" fill="#464646"/><text x="543.8" y="423.7" font-size="6.8" fill="#e6e6e6" stroke="#e6e6e6" stroke-width="0.1" textLength="18.3" lengthAdjust="spacingAndGlyphs">12 Bits</text><rect x="568.9" y="405" width="57" height="8" fill="#f4f4f4"/><rect x="568.9" y="413" width="57" height="16.8" fill="#464646"/><text x="571" y="411.8" font-size="6.8" fill="#302838" stroke="#302838" stroke-width="0.1" textLength="27.8" lengthAdjust="spacingAndGlyphs">Timebase</text><text x="603.5" y="411.8" font-size="6.8" fill="#302838" stroke="#302838" stroke-width="0.1" textLength="21.7" lengthAdjust="spacingAndGlyphs">-724 µs</text><text x="596.7" y="420.3" font-size="6.8" fill="#e6e6e6" stroke="#e6e6e6" stroke-width="0.1" textLength="28.5" lengthAdjust="spacingAndGlyphs">200 µs/div</text><text x="570.5" y="428.3" font-size="6.8" fill="#e6e6e6" stroke="#e6e6e6" stroke-width="0.1" textLength="14" lengthAdjust="spacingAndGlyphs">5 MS</text><text x="601.5" y="428.3" font-size="6.8" fill="#e6e6e6" stroke="#e6e6e6" stroke-width="0.1" textLength="23.7" lengthAdjust="spacingAndGlyphs">2.5 GS/s</text><rect x="628.5" y="405" width="49.5" height="7.6" fill="#f4f4f4"/><rect x="628.5" y="412.6" width="49.5" height="17" fill="#464646"/><text x="630" y="411.4" font-size="6.8" fill="#302838" stroke="#302838" stroke-width="0.1" textLength="20" lengthAdjust="spacingAndGlyphs">Trigger</text><rect x="668.8" y="406" width="9" height="5.8" fill="#000000" rx="1.2"/><text x="669.8" y="411.1" font-size="6" fill="#ffffff" stroke="#ffffff" stroke-width="0.05" font-weight="bold" textLength="7" lengthAdjust="spacingAndGlyphs">DC</text><text x="629.5" y="421" font-size="6.8" fill="#e6e6e6" stroke="#e6e6e6" stroke-width="0.1" textLength="13" lengthAdjust="spacingAndGlyphs">Stop</text><text x="660" y="421" font-size="6.8" fill="#e6e6e6" stroke="#e6e6e6" stroke-width="0.1" textLength="17.5" lengthAdjust="spacingAndGlyphs">3.36 V</text><text x="629.5" y="428.2" font-size="6.8" fill="#e6e6e6" stroke="#e6e6e6" stroke-width="0.1" textLength="10.5" lengthAdjust="spacingAndGlyphs">SPI</text><rect x="19" y="431" width="662" height="9" fill="#2e2e2e"/><text x="22.3" y="439.2" font-size="8.4" fill="#f4f4f4" stroke="#f4f4f4" stroke-width="0.1" font-weight="bold" textLength="34.6" lengthAdjust="spacingAndGlyphs">TELEDYNE</text><text x="58.6" y="439.2" font-size="8.4" fill="#d0d0d0" stroke="#d0d0d0" stroke-width="0.1" textLength="24" lengthAdjust="spacingAndGlyphs">LECROY</text><rect x="599.3" y="434.8" width="96.8" height="28.6" fill="#ffffff"/><path d="M600.3 436 L604.2 436 C605.8 438.5 607 441.5 607.2 445 L607.2 452.8 L606.3 452.8 C605.8 447 604.5 441.5 600.3 437.6 Z" fill="#0a0a0a"/><path d="M607.8 436 L611.7 436 L611.2 452.8 L608.3 452.8 Z" fill="#0a0a0a"/><path d="M619 436 L615.1 436 C613.5 438.5 612.3 441.5 612.1 445 L612.1 452.8 L613 452.8 C613.5 447 614.8 441.5 619 437.6 Z" fill="#0a0a0a"/><rect x="606" y="453" width="7" height="3" fill="#d8d8d8"/><text x="620.4" y="439.3" font-size="3.6" fill="#282828" font-weight="bold" textLength="74.3" lengthAdjust="spacingAndGlyphs">ЦЕНТР ИЗМЕРИТЕЛЬНОЙ ТЕХНИКИ</text><defs><linearGradient id="lg" x1="0" y1="0" x2="0" y2="1"><stop offset="0" stop-color="#f09a00"/><stop offset="0.5" stop-color="#f6b400"/><stop offset="1" stop-color="#ffd81a"/></linearGradient><linearGradient id="rf" x1="0" y1="0" x2="0" y2="1"><stop offset="0" stop-color="#fff0b0"/><stop offset="1" stop-color="#ffffff"/></linearGradient></defs><rect x="622" y="453.2" width="73" height="4" fill="url(#rf)"/><text x="623.2" y="453" font-size="16.6" fill="url(#lg)" stroke="url(#lg)" stroke-width="0.7" font-weight="bold" textLength="10" lengthAdjust="spacingAndGlyphs">Э</text><text x="634.3" y="453" font-size="16.6" fill="url(#lg)" stroke="url(#lg)" stroke-width="0.7" font-weight="bold" textLength="9.1" lengthAdjust="spacingAndGlyphs">Т</text><text x="643.4" y="453" font-size="16.6" fill="url(#lg)" stroke="url(#lg)" stroke-width="0.7" font-weight="bold" textLength="12.8" lengthAdjust="spacingAndGlyphs">А</text><text x="657" y="453" font-size="16.6" fill="url(#lg)" stroke="url(#lg)" stroke-width="0.7" font-weight="bold" textLength="10" lengthAdjust="spacingAndGlyphs">Л</text><text x="686" y="453" font-size="16.6" fill="url(#lg)" stroke="url(#lg)" stroke-width="0.7" font-weight="bold" textLength="9" lengthAdjust="spacingAndGlyphs">Н</text><circle cx="676.1" cy="447.1" r="6.2" fill="url(#lg)"/><line x1="670" y1="443" x2="682.3" y2="443" stroke="#fff3c0" stroke-width="0.5"/><line x1="670" y1="445" x2="682.3" y2="445" stroke="#fff3c0" stroke-width="0.5"/><line x1="670" y1="449.6" x2="682.3" y2="449.6" stroke="#fff3c0" stroke-width="0.5"/><line x1="670" y1="451.6" x2="682.3" y2="451.6" stroke="#fff3c0" stroke-width="0.5"/><line x1="676.1" y1="441" x2="676.1" y2="453.2" stroke="#fff3c0" stroke-width="0.4"/><rect x="670.2" y="446" width="11.8" height="2.6" fill="#2a3c7a"/><text x="601.6" y="462.9" font-size="7.2" fill="#303030" stroke="#303030" stroke-width="0.1" font-weight="bold" textLength="93.1" lengthAdjust="spacingAndGlyphs">ТЕРРИТОРИЯ ИЗМЕРЕНИЙ</text></svg></body></html>
